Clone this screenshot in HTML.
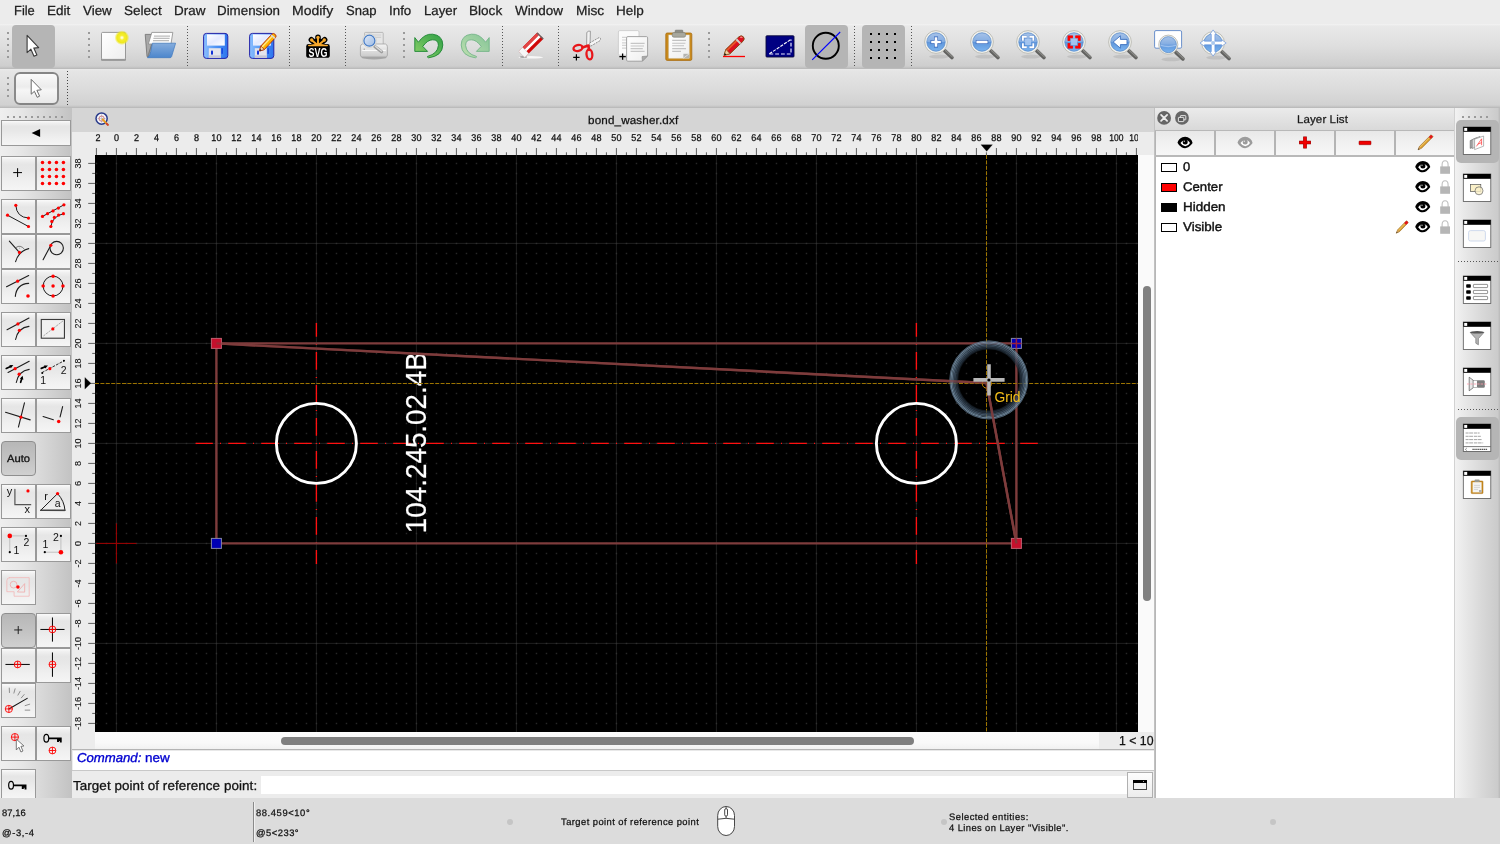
<!DOCTYPE html>
<html lang="en"><head><meta charset="utf-8"><title>bond_washer.dxf - QCAD</title>
<style>
*{box-sizing:border-box;margin:0;padding:0}
html,body{width:1500px;height:844px;overflow:hidden;background:#ececec}
body{font-family:"Liberation Sans",sans-serif;color:#000}
#app{will-change:transform;position:relative;width:1500px;height:844px;overflow:hidden;background:#ececec}
.a{position:absolute}
.t{position:absolute;white-space:nowrap;display:block}
svg{position:absolute;overflow:visible}
.btn{position:absolute;border:1px solid #9c9c9c;background:linear-gradient(#fdfdfd,#ededed 50%,#e4e4e4 52%,#f4f4f4);}
.btnp{position:absolute;border:1px solid #9a9a9a;border-radius:5px;background:linear-gradient(#b4b4b4,#c6c6c6);}

</style></head>
<body>
<div id="app">
<div class="a" style="left:0px;top:0px;width:1500px;height:24px;background:#ececec"></div>
<span class="t" style="left:13.80px;top:3.63px;font-size:13.2px;line-height:13.2px;color:#202020;transform:rotate(0.03deg) scaleX(0.9779);transform-origin:0 50%;-webkit-text-stroke:0.25px #202020;">File</span>
<span class="t" style="left:47.10px;top:3.63px;font-size:13.2px;line-height:13.2px;color:#202020;transform:rotate(0.03deg) scaleX(1.0243);transform-origin:0 50%;-webkit-text-stroke:0.25px #202020;">Edit</span>
<span class="t" style="left:82.90px;top:3.63px;font-size:13.2px;line-height:13.2px;color:#202020;transform:rotate(0.03deg) scaleX(1.0150);transform-origin:0 50%;-webkit-text-stroke:0.25px #202020;">View</span>
<span class="t" style="left:123.80px;top:3.63px;font-size:13.2px;line-height:13.2px;color:#202020;transform:rotate(0.03deg) scaleX(1.0276);transform-origin:0 50%;-webkit-text-stroke:0.25px #202020;">Select</span>
<span class="t" style="left:173.80px;top:3.63px;font-size:13.2px;line-height:13.2px;color:#202020;transform:rotate(0.03deg) scaleX(1.0194);transform-origin:0 50%;-webkit-text-stroke:0.25px #202020;">Draw</span>
<span class="t" style="left:216.70px;top:3.63px;font-size:13.2px;line-height:13.2px;color:#202020;transform:rotate(0.03deg) scaleX(1.0119);transform-origin:0 50%;-webkit-text-stroke:0.25px #202020;">Dimension</span>
<span class="t" style="left:291.80px;top:3.63px;font-size:13.2px;line-height:13.2px;color:#202020;transform:rotate(0.03deg) scaleX(1.0623);transform-origin:0 50%;-webkit-text-stroke:0.25px #202020;">Modify</span>
<span class="t" style="left:346.00px;top:3.63px;font-size:13.2px;line-height:13.2px;color:#202020;transform:rotate(0.03deg) scaleX(0.9893);transform-origin:0 50%;-webkit-text-stroke:0.25px #202020;">Snap</span>
<span class="t" style="left:389.00px;top:3.63px;font-size:13.2px;line-height:13.2px;color:#202020;transform:rotate(0.03deg) scaleX(1.0128);transform-origin:0 50%;-webkit-text-stroke:0.25px #202020;">Info</span>
<span class="t" style="left:423.80px;top:3.63px;font-size:13.2px;line-height:13.2px;color:#202020;transform:rotate(0.03deg) scaleX(1.0024);transform-origin:0 50%;-webkit-text-stroke:0.25px #202020;">Layer</span>
<span class="t" style="left:469.20px;top:3.63px;font-size:13.2px;line-height:13.2px;color:#202020;transform:rotate(0.03deg) scaleX(1.0285);transform-origin:0 50%;-webkit-text-stroke:0.25px #202020;">Block</span>
<span class="t" style="left:515.30px;top:3.63px;font-size:13.2px;line-height:13.2px;color:#202020;transform:rotate(0.03deg) scaleX(1.0224);transform-origin:0 50%;-webkit-text-stroke:0.25px #202020;">Window</span>
<span class="t" style="left:575.70px;top:3.63px;font-size:13.2px;line-height:13.2px;color:#202020;transform:rotate(0.03deg) scaleX(1.0395);transform-origin:0 50%;-webkit-text-stroke:0.25px #202020;">Misc</span>
<span class="t" style="left:615.80px;top:3.63px;font-size:13.2px;line-height:13.2px;color:#202020;transform:rotate(0.03deg) scaleX(1.0240);transform-origin:0 50%;-webkit-text-stroke:0.25px #202020;">Help</span>
<div class="a" style="left:0px;top:24px;width:1500px;height:45px;background:linear-gradient(#f3f3f3 0,#e9e9e9 2px,#dedede 50%,#cecece 42px,#c0c0c0 44px,#b6b6b6 45px)"></div>
<div class="a" style="left:0px;top:69px;width:1500px;height:39px;background:linear-gradient(#eaeaea 0,#e5e5e5 2px,#dcdcdc 50%,#d1d1d1 36px,#c2c2c2 38px,#b4b4b4 39px)"></div>
<div class="a" style="left:7px;top:32px;width:2px;height:2px;background:#9a9a9a"></div><div class="a" style="left:7px;top:38px;width:2px;height:2px;background:#9a9a9a"></div><div class="a" style="left:7px;top:44px;width:2px;height:2px;background:#9a9a9a"></div><div class="a" style="left:7px;top:50px;width:2px;height:2px;background:#9a9a9a"></div><div class="a" style="left:7px;top:56px;width:2px;height:2px;background:#9a9a9a"></div>
<div class="a" style="left:88px;top:32px;width:2px;height:2px;background:#9a9a9a"></div><div class="a" style="left:88px;top:38px;width:2px;height:2px;background:#9a9a9a"></div><div class="a" style="left:88px;top:44px;width:2px;height:2px;background:#9a9a9a"></div><div class="a" style="left:88px;top:50px;width:2px;height:2px;background:#9a9a9a"></div><div class="a" style="left:88px;top:56px;width:2px;height:2px;background:#9a9a9a"></div>
<div class="a" style="left:403px;top:32px;width:2px;height:2px;background:#9a9a9a"></div><div class="a" style="left:403px;top:38px;width:2px;height:2px;background:#9a9a9a"></div><div class="a" style="left:403px;top:44px;width:2px;height:2px;background:#9a9a9a"></div><div class="a" style="left:403px;top:50px;width:2px;height:2px;background:#9a9a9a"></div><div class="a" style="left:403px;top:56px;width:2px;height:2px;background:#9a9a9a"></div>
<div class="a" style="left:708px;top:32px;width:2px;height:2px;background:#9a9a9a"></div><div class="a" style="left:708px;top:38px;width:2px;height:2px;background:#9a9a9a"></div><div class="a" style="left:708px;top:44px;width:2px;height:2px;background:#9a9a9a"></div><div class="a" style="left:708px;top:50px;width:2px;height:2px;background:#9a9a9a"></div><div class="a" style="left:708px;top:56px;width:2px;height:2px;background:#9a9a9a"></div>
<div class="a" style="left:7px;top:77px;width:2px;height:2px;background:#9a9a9a"></div><div class="a" style="left:7px;top:83px;width:2px;height:2px;background:#9a9a9a"></div><div class="a" style="left:7px;top:89px;width:2px;height:2px;background:#9a9a9a"></div><div class="a" style="left:7px;top:95px;width:2px;height:2px;background:#9a9a9a"></div>
<div class="a" style="left:187px;top:26px;width:1px;height:40px;background:repeating-linear-gradient(#555 0,#555 1px,transparent 1px,transparent 3px)"></div>
<div class="a" style="left:289px;top:26px;width:1px;height:40px;background:repeating-linear-gradient(#555 0,#555 1px,transparent 1px,transparent 3px)"></div>
<div class="a" style="left:345px;top:26px;width:1px;height:40px;background:repeating-linear-gradient(#555 0,#555 1px,transparent 1px,transparent 3px)"></div>
<div class="a" style="left:502px;top:26px;width:1px;height:40px;background:repeating-linear-gradient(#555 0,#555 1px,transparent 1px,transparent 3px)"></div>
<div class="a" style="left:558px;top:26px;width:1px;height:40px;background:repeating-linear-gradient(#555 0,#555 1px,transparent 1px,transparent 3px)"></div>
<div class="a" style="left:854px;top:26px;width:1px;height:40px;background:repeating-linear-gradient(#555 0,#555 1px,transparent 1px,transparent 3px)"></div>
<div class="a" style="left:911px;top:26px;width:1px;height:40px;background:repeating-linear-gradient(#555 0,#555 1px,transparent 1px,transparent 3px)"></div>
<div class="a" style="left:67px;top:71px;width:1px;height:34px;background:repeating-linear-gradient(#444 0,#444 1px,transparent 1px,transparent 3px)"></div>
<div class="a" style="left:12px;top:25px;width:43px;height:43px;background:#b5b5b5;border-radius:4px"></div>
<div class="a" style="left:805px;top:25px;width:43px;height:43px;background:#b5b5b5;border-radius:4px"></div>
<div class="a" style="left:862px;top:25px;width:43px;height:43px;background:#b5b5b5;border-radius:4px"></div>
<div class="a" style="left:14px;top:72px;width:45px;height:33px;border-radius:6px;background:linear-gradient(#fcfcfc,#ececec 45%,#f6f6f6 55%,#e6e6e6)"></div>
<svg style="left:14px;top:72px" width="45" height="33" viewBox="0 0 45 33"><rect x="1" y="1" width="43" height="31" rx="5" fill="none" stroke="#858585" stroke-width="1.9"/></svg>
<div class="a" style="left:0px;top:108px;width:72px;height:690px;background:linear-gradient(90deg,#efefef 0,#e6e6e6 30%,#d2d2d2 70%,#c2c2c2 100%)"></div>
<div class="a" style="left:7px;top:116px;width:2px;height:2px;background:#9a9a9a"></div><div class="a" style="left:13px;top:116px;width:2px;height:2px;background:#9a9a9a"></div><div class="a" style="left:19px;top:116px;width:2px;height:2px;background:#9a9a9a"></div><div class="a" style="left:25px;top:116px;width:2px;height:2px;background:#9a9a9a"></div><div class="a" style="left:31px;top:116px;width:2px;height:2px;background:#9a9a9a"></div><div class="a" style="left:37px;top:116px;width:2px;height:2px;background:#9a9a9a"></div><div class="a" style="left:43px;top:116px;width:2px;height:2px;background:#9a9a9a"></div><div class="a" style="left:49px;top:116px;width:2px;height:2px;background:#9a9a9a"></div><div class="a" style="left:55px;top:116px;width:2px;height:2px;background:#9a9a9a"></div><div class="a" style="left:61px;top:116px;width:2px;height:2px;background:#9a9a9a"></div>
<div class="a" style="left:72px;top:108px;width:1083px;height:24px;background:#d5d5d5"></div>
<svg style="left:95px;top:112px" width="14" height="14" viewBox="0 0 14 14"><circle cx="6.6" cy="6.6" r="5.6" fill="#f4f4f8" stroke="#2a3c8c" stroke-width="1.5"/><path d="M6.6 2.4V10.8M2.4 6.6H10.8" stroke="#b8b8c8" stroke-width="0.7"/><circle cx="6.6" cy="6.6" r="2.6" fill="none" stroke="#c05050" stroke-width="0.7"/><path d="M7.6 7.4L12.6 12.6" stroke="#e8a020" stroke-width="2" stroke-linecap="round"/><path d="M11.6 11.6L12.9 12.9" stroke="#d04030" stroke-width="2" stroke-linecap="round"/></svg>
<span class="t" style="left:588.40px;top:115.03px;font-size:11.3px;line-height:11.3px;color:#111;letter-spacing:0.155px;transform:rotate(0.03deg) scaleX(1.0300);transform-origin:0 50%;-webkit-text-stroke:0.25px #111;">bond_washer.dxf</span>
<div class="a" style="left:72px;top:132px;width:1083px;height:23px;background:#ececec"></div>
<div class="a" style="left:72px;top:155px;width:23px;height:595px;background:#ececec"></div>
<div class="a" style="left:1138px;top:155px;width:17px;height:595px;background:#fafafa"></div>
<div class="a" style="left:95px;top:732px;width:1043px;height:18px;background:linear-gradient(#fbfbfb,#f9f9f9 60%,#f0f0f0)"></div>
<div class="a" style="left:1143px;top:286px;width:8px;height:315px;background:#808080;border-radius:4px"></div>
<div class="a" style="left:281px;top:737px;width:633px;height:8px;background:#7f7f7f;border-radius:4px"></div>
<div class="a" style="left:1099px;top:732px;width:55px;height:17px;background:#ececec"></div>
<span class="t" style="left:1119.00px;top:734.30px;font-size:13px;line-height:13px;color:#111;transform:rotate(0.03deg) scaleX(0.9451);transform-origin:0 50%;-webkit-text-stroke:0.25px #111;">1 &lt; 10</span>
<div class="a" style="left:72px;top:749px;width:1083px;height:2px;background:linear-gradient(#b4b4b4 0,#b4b4b4 1px,#dcdcdc 1px,#f4f4f4 2px)"></div>
<div class="a" style="left:73px;top:751px;width:1082px;height:19px;background:#fff"></div>
<div class="a" style="left:72px;top:770px;width:1083px;height:1px;background:#c8c8c8"></div>
<span class="t" style="left:77.20px;top:751.88px;font-size:12.9px;line-height:12.9px;color:#0000d0;font-style:italic;transform:rotate(0.03deg) scaleX(1.0207);transform-origin:0 50%;-webkit-text-stroke:0.35px #0000d0;">Command:</span>
<span class="t" style="left:145.30px;top:751.88px;font-size:12.9px;line-height:12.9px;color:#0000d0;transform:rotate(0.03deg) scaleX(1.0479);transform-origin:0 50%;-webkit-text-stroke:0.35px #0000d0;">new</span>
<div class="a" style="left:72px;top:771px;width:1083px;height:27px;background:#ececec"></div>
<span class="t" style="left:73.20px;top:778.80px;font-size:13px;line-height:13px;color:#111;letter-spacing:0.078px;transform:rotate(0.03deg) scaleX(1.0300);transform-origin:0 50%;-webkit-text-stroke:0.3px #111;">Target point of reference point:</span>
<div class="a" style="left:261px;top:776px;width:866px;height:18px;background:#fff"></div>
<div class="a" style="left:1127px;top:772px;width:26px;height:26px;border:1px solid #b0b0b0;background:linear-gradient(#fdfdfd,#ececec)"></div>
<svg style="left:1133px;top:780px" width="14" height="10" viewBox="0 0 14 10"><rect x="0.5" y="0.5" width="13" height="9" fill="#f2f2f2" stroke="#444" stroke-width="1"/><rect x="0" y="0" width="14" height="3" fill="#000"/><rect x="10" y="1" width="1" height="1" fill="#aaa"/></svg>
<div class="a" style="left:0px;top:798px;width:1500px;height:46px;background:#dcdcdc"></div>
<span class="t" style="left:2.00px;top:807.54px;font-size:9.4px;line-height:9.4px;color:#111;letter-spacing:0.095px;transform:rotate(0.03deg) scaleX(1.0000);transform-origin:0 50%;-webkit-text-stroke:0.25px #111;">87,16</span>
<span class="t" style="left:2.00px;top:827.74px;font-size:9.4px;line-height:9.4px;color:#111;letter-spacing:0.655px;transform:rotate(0.03deg) scaleX(1.0000);transform-origin:0 50%;-webkit-text-stroke:0.25px #111;">@-3,-4</span>
<div class="a" style="left:253px;top:802px;width:1px;height:40px;background:#8a8a8a"></div>
<div class="a" style="left:254px;top:802px;width:1px;height:40px;background:#f0f0f0"></div>
<span class="t" style="left:256.00px;top:807.54px;font-size:9.4px;line-height:9.4px;color:#111;letter-spacing:0.594px;transform:rotate(0.03deg) scaleX(1.0000);transform-origin:0 50%;-webkit-text-stroke:0.25px #111;">88.459&lt;10°</span>
<span class="t" style="left:256.00px;top:827.84px;font-size:9.4px;line-height:9.4px;color:#111;letter-spacing:0.500px;transform:rotate(0.03deg) scaleX(1.0000);transform-origin:0 50%;-webkit-text-stroke:0.25px #111;">@5&lt;233°</span>
<span class="t" style="left:560.60px;top:817.24px;font-size:9.4px;line-height:9.4px;color:#111;letter-spacing:0.442px;transform:rotate(0.03deg) scaleX(1.0000);transform-origin:0 50%;-webkit-text-stroke:0.25px #111;">Target point of reference point</span>
<span class="t" style="left:949.00px;top:812.24px;font-size:9.4px;line-height:9.4px;color:#111;letter-spacing:0.467px;transform:rotate(0.03deg) scaleX(1.0000);transform-origin:0 50%;-webkit-text-stroke:0.25px #111;">Selected entities:</span>
<span class="t" style="left:949.00px;top:823.24px;font-size:9.4px;line-height:9.4px;color:#111;letter-spacing:0.410px;transform:rotate(0.03deg) scaleX(1.0000);transform-origin:0 50%;-webkit-text-stroke:0.25px #111;">4 Lines on Layer &quot;Visible&quot;.</span>
<div class="a" style="left:506.5px;top:819px;width:6px;height:6px;background:#c5c5c5;border-radius:3px"></div>
<div class="a" style="left:940.5px;top:819px;width:6px;height:6px;background:#c5c5c5;border-radius:3px"></div>
<div class="a" style="left:1269.5px;top:819px;width:6px;height:6px;background:#c5c5c5;border-radius:3px"></div>
<svg style="left:717px;top:806px" width="18" height="30" viewBox="0 0 18 30"><rect x="0.7" y="0.5" width="16.8" height="29" rx="8.4" ry="9" fill="#fff" stroke="#333" stroke-width="0.9"/><path d="M0.9 13.2Q9 11.4 17.3 13.2M9.1 0.6V2.6M9.1 10.2V12.2" stroke="#333" stroke-width="0.9" fill="none"/><rect x="7.7" y="2.6" width="2.8" height="7.6" rx="1.4" fill="#fff" stroke="#333" stroke-width="0.9"/></svg>
<svg style="left:0;top:24px" width="1500" height="84" viewBox="0 24 1500 84"><defs>
<linearGradient id="lens" x1="0" y1="0" x2="0" y2="1"><stop offset="0" stop-color="#8fb2e2"/><stop offset="0.5" stop-color="#5f95da"/><stop offset="1" stop-color="#7ab4f0"/></linearGradient>
<linearGradient id="pg" x1="0" y1="0" x2="1" y2="1"><stop offset="0" stop-color="#ffffff"/><stop offset="1" stop-color="#eeeeee"/></linearGradient>
<radialGradient id="sun" cx="0.5" cy="0.5" r="0.5"><stop offset="0" stop-color="#fffff4"/><stop offset="0.12" stop-color="#fffbc0"/><stop offset="0.32" stop-color="#f6ee30"/><stop offset="0.68" stop-color="#efe81c"/><stop offset="1" stop-color="#efe81c" stop-opacity="0"/></radialGradient>
<linearGradient id="fl" x1="0" y1="0" x2="1" y2="0"><stop offset="0" stop-color="#8cc0ff"/><stop offset="0.5" stop-color="#4f93f4"/><stop offset="1" stop-color="#2c74ee"/></linearGradient>
<linearGradient id="flw" x1="0" y1="0" x2="1" y2="1"><stop offset="0" stop-color="#ffffff"/><stop offset="0.5" stop-color="#e4eaff"/><stop offset="1" stop-color="#ffffff"/></linearGradient>
<linearGradient id="fold" x1="0" y1="0" x2="0" y2="1"><stop offset="0" stop-color="#86addd"/><stop offset="1" stop-color="#4c86cc"/></linearGradient>
<linearGradient id="und" x1="0" y1="1" x2="1" y2="0"><stop offset="0" stop-color="#8fd26a"/><stop offset="1" stop-color="#2e9f45"/></linearGradient>
<linearGradient id="red" x1="1" y1="1" x2="0" y2="0"><stop offset="0" stop-color="#bfe0b0"/><stop offset="1" stop-color="#84c496"/></linearGradient>
<linearGradient id="prn" x1="0" y1="0" x2="0" y2="1"><stop offset="0" stop-color="#f4f4f4"/><stop offset="1" stop-color="#c9c9c9"/></linearGradient>
<linearGradient id="gl" x1="0" y1="0" x2="1" y2="1"><stop offset="0" stop-color="#dfe9f8"/><stop offset="1" stop-color="#9dbbe4"/></linearGradient>
</defs><path d="M27.1 35.4V52.6L30.9 49.2L34 56.2L36.9 54.9L33.8 48.1L38.7 47.6Z" fill="#fff" stroke="#3a3a3a" stroke-width="1.1" stroke-linejoin="round"/><path d="M31.2 79.4V94.2L34.4 91.3L37.2 97.3L39.6 96.2L36.9 90.3L41.3 89.8Z" fill="#fff" stroke="#6a6a6a" stroke-width="1" stroke-linejoin="round"/><rect x="101" y="58.6" width="25" height="2.2" rx="1" fill="#8c8c8c"/><rect x="101.5" y="32.4" width="24" height="27" rx="1.2" fill="url(#pg)" stroke="#8e8e8e" stroke-width="0.9"/><circle cx="121.9" cy="37.7" r="7.4" fill="url(#sun)"/><path d="M145.2 34.4H151.2L152.6 36H170V56.6H147Z" fill="#a8a8a8" stroke="#6e6e6e" stroke-width="0.8"/><path d="M151.8 32.4H172.8L171 44H148.4Z" fill="#fdfdfd" stroke="#8a8a8a" stroke-width="0.8"/><path d="M154 36.2H170M153.4 38.4H169.6M153 40.6H169" stroke="#bcbcbc" stroke-width="1.3"/><path d="M148 57L151.6 44.6L147.8 56Z" fill="#fff" stroke="#777" stroke-width="0.8"/><path d="M152.4 43.2H175.6L171.6 56.6Q171.3 57.7 170 57.7H147.4Q150.2 55.6 150.8 51.6Z" fill="url(#fold)" stroke="#3f78be" stroke-width="0.7"/><rect x="203.6" y="33.4" width="24.2" height="25" rx="2.8" fill="url(#fl)" stroke="#2424a8" stroke-width="1"/><rect x="207.0" y="34.4" width="17.8" height="11.2" fill="url(#flw)"/><rect x="208.79999999999998" y="48.2" width="12" height="9.6" fill="#e4e4ec"/><rect x="208.79999999999998" y="55.4" width="12" height="2.4" fill="#c6c6d4"/><rect x="211.0" y="50.4" width="2" height="4.4" rx="0.8" fill="#1030d8"/><rect x="221.4" y="48.2" width="1.6" height="5.6" fill="#1848e0"/><rect x="249.6" y="33.4" width="24.2" height="25" rx="2.8" fill="url(#fl)" stroke="#2424a8" stroke-width="1"/><rect x="253.0" y="34.4" width="17.8" height="11.2" fill="url(#flw)"/><rect x="254.79999999999998" y="48.2" width="12" height="9.6" fill="#e4e4ec"/><rect x="254.79999999999998" y="55.4" width="12" height="2.4" fill="#c6c6d4"/><rect x="257.0" y="50.4" width="2" height="4.4" rx="0.8" fill="#1030d8"/><rect x="267.4" y="48.2" width="1.6" height="5.6" fill="#1848e0"/><g transform="translate(259.6 51) rotate(-47)"><path d="M0 0L4.4 -2.5H20.6Q22.8 -2.5 22.8 0Q22.8 2.5 20.6 2.5H4.4Z" fill="#ffb400" stroke="#b03010" stroke-width="0.9" stroke-linejoin="round"/><path d="M4.6 -0.9H19.6" stroke="#ffe890" stroke-width="1.3"/><path d="M0 0L4.4 -2.5V2.5Z" fill="#f6d9a8" stroke="#a03010" stroke-width="0.7"/><path d="M0 0L1.8 -1V1Z" fill="#222"/><path d="M19.6 -2.5V2.5" stroke="#d8d8d8" stroke-width="1.6"/></g><path d="M306.2 46.4Q306.2 44 308.6 44H327.4Q329.8 44 329.8 46.4V55.2Q329.8 57.8 327.2 57.8H308.8Q306.2 57.8 306.2 55.2Z" fill="#000"/><g stroke="#000" stroke-width="5.6" stroke-linecap="round"><path d="M318 44.6V37.2M317 44.6L311.4 39.8M319 44.6L324.6 39.8"/></g><g stroke="#f7a92c" stroke-width="1.9" stroke-linecap="round"><path d="M318 44.8V37.6M317.2 44.8L311.8 40.2M318.8 44.8L324.2 40.2"/></g><circle cx="318" cy="37.4" r="1.7" fill="#f7a92c"/><circle cx="311.7" cy="40" r="1.7" fill="#f7a92c"/><circle cx="324.3" cy="40" r="1.7" fill="#f7a92c"/><path d="M309 45.6Q318 42 327 45.6Z" fill="#f7a92c"/><path d="M308.8 45.4H327.2" stroke="#f7a92c" stroke-width="1.5" stroke-linecap="round"/><text x="318" y="56.7" font-family="Liberation Sans, sans-serif" font-weight="bold" font-size="13.4" fill="#fff" text-anchor="middle" textLength="18.8" lengthAdjust="spacingAndGlyphs">SVG</text><ellipse cx="374" cy="57.6" rx="12.6" ry="1.8" fill="#000" opacity="0.22"/><rect x="364.6" y="32.4" width="18.6" height="13" rx="0.8" fill="#e6e6e6" stroke="#adadad" stroke-width="0.8"/><path d="M366.6 35H381.2M366.6 37.4H381.2" stroke="#d0d0d0" stroke-width="1.2"/><path d="M362.4 44H385.4Q387.4 44.6 387.4 46.8V55Q387.4 57 385.4 57H362.4Q360.4 57 360.4 55V46.8Q360.4 44.6 362.4 44Z" fill="url(#prn)" stroke="#a2a2a2" stroke-width="0.8"/><path d="M362.2 50.4H385.8" stroke="#fafafa" stroke-width="1.2"/><circle cx="364.2" cy="49.2" r="0.6" fill="#888"/><path d="M374.8 46.4L381.6 51.8" stroke="#9e9e9e" stroke-width="3.2" stroke-linecap="round"/><path d="M375.4 46.2L381.6 51.2" stroke="#dedede" stroke-width="1.2" stroke-linecap="round"/><circle cx="369.4" cy="40.7" r="6.9" fill="#f2f2f0" stroke="#c4c4c0" stroke-width="0.6"/><circle cx="369.4" cy="40.7" r="5.5" fill="url(#gl)" stroke="#4178c4" stroke-width="1.2"/><path d="M414.8 37.6L418.4 42.2Q424.6 33.4 432.6 34.2Q442.6 35.2 442.8 45Q442.4 56 428.6 57.8Q426.8 57.2 427.6 56.4Q437.8 53.6 438.4 45.4Q438.4 39.6 432.6 39.8Q427.6 39.8 422.8 46.4L427.6 51.4H414.8Z" fill="url(#und)" stroke="#1c8632" stroke-width="0.9" stroke-linejoin="round"/><g transform="translate(904 0) scale(-1 1)"><path d="M414.8 37.6L418.4 42.2Q424.6 33.4 432.6 34.2Q442.6 35.2 442.8 45Q442.4 56 428.6 57.8Q426.8 57.2 427.6 56.4Q437.8 53.6 438.4 45.4Q438.4 39.6 432.6 39.8Q427.6 39.8 422.8 46.4L427.6 51.4H414.8Z" fill="url(#red)" stroke="#74b488" stroke-width="0.9" stroke-linejoin="round"/></g><ellipse cx="530.8" cy="57.3" rx="12.4" ry="1.3" fill="#fff" opacity="0.8"/><ellipse cx="523.6" cy="57" rx="3.6" ry="1.1" fill="#555" opacity="0.5"/><g transform="translate(521.8 54.3) rotate(-45)"><rect x="0" y="-4.4" width="26.4" height="8.8" rx="0.8" fill="#d00808"/><rect x="0" y="-1.6" width="26.4" height="2.7" fill="#fff"/><rect x="0" y="-4.4" width="26.4" height="2.8" fill="#e24444"/><rect x="-0.2" y="-4.4" width="5.6" height="8.8" fill="#f6f6f6" stroke="#c9c9c9" stroke-width="0.5"/><rect x="25.2" y="-4.4" width="1.4" height="8.8" fill="#666"/></g><path d="M586.6 46.6L586.8 32.4Q588.6 30.6 590.4 31.2L590 46Z" fill="#f2f2f2" stroke="#8a8a8a" stroke-width="0.8" stroke-linejoin="round"/><path d="M589.6 43L599.4 37.4Q601 38.2 600.4 40.4L590 46.6Z" fill="#f6f6f6" stroke="#777" stroke-width="0.8" stroke-dasharray="2 1" stroke-linejoin="round"/><ellipse cx="578" cy="48" rx="4.6" ry="2.9" transform="rotate(-14 578 48)" fill="none" stroke="#e8161a" stroke-width="2.3"/><ellipse cx="589.4" cy="54.4" rx="2.9" ry="5" transform="rotate(-6 589.4 54.4)" fill="none" stroke="#e8161a" stroke-width="2.3"/><path d="M582.4 47.4L588.4 45.6L589 50" stroke="#e8161a" stroke-width="2.6" fill="none" stroke-linejoin="round" stroke-linecap="round"/><path d="M573.2 57.4H579.6M576.4 54.2V60.6" stroke="#000" stroke-width="1.2"/><rect x="618.4" y="30.6" width="20.6" height="24.6" rx="1.4" fill="#fbfbfb" stroke="#c8c8c8" stroke-width="0.8"/><path d="M622 37.4H632M622 40H632M622 42.8H632M622 45.4H632M622 48.2H632" stroke="#d4d4d4" stroke-width="1.2"/><path d="M627.8 36.6H646.4Q647.6 36.6 647.6 37.8V56L642.4 61.2H627.8Q626.6 61.2 626.6 60V37.8Q626.6 36.6 627.8 36.6Z" fill="url(#pg)" stroke="#9a9a9a" stroke-width="0.9"/><path d="M630.6 43.4H644.6M630.6 46H644M630.6 48.6H642.8M630.6 51.4H644.6" stroke="#c6c6c6" stroke-width="1.2"/><path d="M647.4 56L642.4 61L642 56.6Z" fill="#aaa" stroke="#8a8a8a" stroke-width="0.6"/><path d="M619.4 56.6H625.8M622.6 53.4V59.8" stroke="#000" stroke-width="1.3"/><rect x="665.8" y="33" width="26" height="27.4" rx="1.4" fill="#c98a1c" stroke="#a86c10" stroke-width="0.8"/><rect x="668.8" y="35" width="20.4" height="23.2" fill="url(#pg)" stroke="#d8d8d0" stroke-width="0.5"/><path d="M672.2 40.4H686M672.2 43.2H685.4M672.2 45.8H684M672.2 48.6H686M672.2 51.4H681" stroke="#c2c2c2" stroke-width="1.1"/><path d="M683.4 53.8H689.2V58.2H683.4Z" fill="#b4b4b0"/><path d="M683.4 58.2L689.2 53.8" stroke="#e8e8e8" stroke-width="0.8"/><rect x="675.2" y="30.2" width="7.6" height="3.4" rx="0.6" fill="#8e8e86" stroke="#6a6a64" stroke-width="0.6"/><rect x="672.2" y="32.6" width="13.4" height="4.6" rx="1.6" fill="#a8a89e" stroke="#7a7a72" stroke-width="0.6"/><path d="M723 56.5H745" stroke="#fe0000" stroke-width="1.3"/><g transform="translate(724.1 55.3) rotate(-44) scale(1.085 1)"><path d="M0 0L5 -3H21.6Q24.6 -3 24.6 0Q24.6 3 21.6 3H5Z" fill="#dc1020" stroke="#7a4a10" stroke-width="0.8" stroke-linejoin="round"/><path d="M5 -1.6H18.6" stroke="#e85a28" stroke-width="1.6"/><path d="M18.4 -3V3" stroke="#d0d0d0" stroke-width="1.8"/><path d="M22 -1.6Q23.2 -1.4 23.4 0" stroke="#ff8a8a" stroke-width="1.2" fill="none"/><path d="M0 0L5 -3V3Z" fill="#f2cfa0" stroke="#7a4a10" stroke-width="0.6"/><path d="M0 0L2 -1.2V1.2Z" fill="#111"/></g><rect x="766" y="35.8" width="28" height="21.2" rx="0.8" fill="#000082" stroke="#0a0a3c" stroke-width="0.9"/><path d="M769.4 53.8L791 39.4" stroke="#fff" stroke-width="1.1" stroke-dasharray="3.2 1.2"/><path d="M769.4 54H791V39.6" stroke="#e8e8ff" stroke-width="1.2" stroke-dasharray="3.8 2" fill="none"/><circle cx="825.8" cy="45.8" r="13" fill="none" stroke="#000" stroke-width="1.9"/><path d="M812.2 59.8L840.2 32" stroke="#0000ff" stroke-width="1.1"/><rect x="870.0" y="33.0" width="2" height="2" fill="#000"/><rect x="870.0" y="41.0" width="2" height="2" fill="#000"/><rect x="870.0" y="49.0" width="2" height="2" fill="#000"/><rect x="870.0" y="57.0" width="2" height="2" fill="#000"/><rect x="878.0" y="33.0" width="2" height="2" fill="#000"/><rect x="878.0" y="41.0" width="2" height="2" fill="#000"/><rect x="878.0" y="49.0" width="2" height="2" fill="#000"/><rect x="878.0" y="57.0" width="2" height="2" fill="#000"/><rect x="886.0" y="33.0" width="2" height="2" fill="#000"/><rect x="886.0" y="41.0" width="2" height="2" fill="#000"/><rect x="886.0" y="49.0" width="2" height="2" fill="#000"/><rect x="886.0" y="57.0" width="2" height="2" fill="#000"/><rect x="894.0" y="33.0" width="2" height="2" fill="#000"/><rect x="894.0" y="41.0" width="2" height="2" fill="#000"/><rect x="894.0" y="49.0" width="2" height="2" fill="#000"/><rect x="894.0" y="57.0" width="2" height="2" fill="#000"/><ellipse cx="939" cy="56.6" rx="10" ry="2" fill="#000" opacity="0.09"/><path d="M944.9 50.9L951.9 57.5" stroke="#626260" stroke-width="3.7" stroke-linecap="round"/><path d="M945.5 50.5L952.3 56.9" stroke="#8a8a86" stroke-width="1.2" stroke-linecap="round"/><circle cx="936" cy="42.0" r="11.4" fill="#f1f1ec" stroke="#b4b4ac" stroke-width="0.8"/><circle cx="936" cy="42.0" r="9.2" fill="url(#lens)" stroke="#5b8dcc" stroke-width="0.8"/><path d="M927.2 42.0A8.8 8.8 0 0 1 944.8 42.0Z" fill="#fff" opacity="0.22"/><path d="M936 36.6V47.4M930.6 42H941.4" stroke="#2f62b8" stroke-width="4"/><path d="M936 37.2V46.8M931.2 42H940.8" stroke="#fff" stroke-width="2.7"/><ellipse cx="985" cy="56.6" rx="10" ry="2" fill="#000" opacity="0.09"/><path d="M990.9 50.9L997.9 57.5" stroke="#626260" stroke-width="3.7" stroke-linecap="round"/><path d="M991.5 50.5L998.3 56.9" stroke="#8a8a86" stroke-width="1.2" stroke-linecap="round"/><circle cx="982" cy="42.0" r="11.4" fill="#f1f1ec" stroke="#b4b4ac" stroke-width="0.8"/><circle cx="982" cy="42.0" r="9.2" fill="url(#lens)" stroke="#5b8dcc" stroke-width="0.8"/><path d="M973.2 42.0A8.8 8.8 0 0 1 990.8 42.0Z" fill="#fff" opacity="0.22"/><path d="M975.8 42H988.2" stroke="#2f62b8" stroke-width="4"/><path d="M976.4 42H987.6" stroke="#fff" stroke-width="2.7"/><ellipse cx="1031" cy="56.6" rx="10" ry="2" fill="#000" opacity="0.09"/><path d="M1036.9 50.9L1043.9 57.5" stroke="#626260" stroke-width="3.7" stroke-linecap="round"/><path d="M1037.5 50.5L1044.3 56.9" stroke="#8a8a86" stroke-width="1.2" stroke-linecap="round"/><circle cx="1028" cy="42.0" r="11.4" fill="#f1f1ec" stroke="#b4b4ac" stroke-width="0.8"/><circle cx="1028" cy="42.0" r="9.2" fill="url(#lens)" stroke="#5b8dcc" stroke-width="0.8"/><path d="M1019.2 42.0A8.8 8.8 0 0 1 1036.8 42.0Z" fill="#fff" opacity="0.22"/><rect x="1025.1" y="39" width="6" height="6" fill="#a9c8f0" opacity="0.9"/><path d="M1022.8999999999999 40.7V36.8H1026.8M1029.3999999999999 36.8H1033.3V40.7M1033.3 43.3V47.2H1029.3999999999999M1026.8 47.2H1022.8999999999999V43.3" stroke="#3f74c4" stroke-width="2.8" fill="none" stroke-linejoin="miter"/><path d="M1022.8999999999999 40.7V36.8H1026.8M1029.3999999999999 36.8H1033.3V40.7M1033.3 43.3V47.2H1029.3999999999999M1026.8 47.2H1022.8999999999999V43.3" stroke="#fff" stroke-width="1.9" fill="none" stroke-linejoin="miter"/><ellipse cx="1077" cy="56.6" rx="10" ry="2" fill="#000" opacity="0.09"/><path d="M1082.9 50.9L1089.9 57.5" stroke="#626260" stroke-width="3.7" stroke-linecap="round"/><path d="M1083.5 50.5L1090.3 56.9" stroke="#8a8a86" stroke-width="1.2" stroke-linecap="round"/><circle cx="1074" cy="42.0" r="11.4" fill="#f1f1ec" stroke="#b4b4ac" stroke-width="0.8"/><circle cx="1074" cy="42.0" r="9.2" fill="url(#lens)" stroke="#5b8dcc" stroke-width="0.8"/><path d="M1065.2 42.0A8.8 8.8 0 0 1 1082.8 42.0Z" fill="#fff" opacity="0.22"/><rect x="1071.1" y="39" width="6" height="6" fill="#a9c8f0" opacity="0.9"/><path d="M1068.8999999999999 40.7V36.8H1072.8M1075.3999999999999 36.8H1079.3V40.7M1079.3 43.3V47.2H1075.3999999999999M1072.8 47.2H1068.8999999999999V43.3" stroke="#d82020" stroke-width="2.8" fill="none" stroke-linejoin="miter"/><path d="M1068.8999999999999 40.7V36.8H1072.8M1075.3999999999999 36.8H1079.3V40.7M1079.3 43.3V47.2H1075.3999999999999M1072.8 47.2H1068.8999999999999V43.3" stroke="#ff0000" stroke-width="1.9" fill="none" stroke-linejoin="miter"/><ellipse cx="1123" cy="56.6" rx="10" ry="2" fill="#000" opacity="0.09"/><path d="M1128.9 50.9L1135.9 57.5" stroke="#626260" stroke-width="3.7" stroke-linecap="round"/><path d="M1129.5 50.5L1136.3 56.9" stroke="#8a8a86" stroke-width="1.2" stroke-linecap="round"/><circle cx="1120" cy="42.0" r="11.4" fill="#f1f1ec" stroke="#b4b4ac" stroke-width="0.8"/><circle cx="1120" cy="42.0" r="9.2" fill="url(#lens)" stroke="#5b8dcc" stroke-width="0.8"/><path d="M1111.2 42.0A8.8 8.8 0 0 1 1128.8 42.0Z" fill="#fff" opacity="0.22"/><path d="M1113.2 42L1120.4 35.8V39.4H1127V44.6H1120.4V48.2Z" fill="#fff" stroke="#3a6fc0" stroke-width="0.9" stroke-linejoin="round"/><rect x="1154.6" y="30.6" width="27" height="17.6" rx="1.4" fill="#fff" stroke="#6a90cc" stroke-width="1"/><ellipse cx="1171.3" cy="59.300000000000004" rx="10" ry="2" fill="#000" opacity="0.09"/><path d="M1175.9 52.3L1182.9 58.9" stroke="#626260" stroke-width="3.7" stroke-linecap="round"/><path d="M1176.5 51.9L1183.3 58.3" stroke="#8a8a86" stroke-width="1.2" stroke-linecap="round"/><circle cx="1168.3" cy="44.7" r="9.6" fill="#f1f1ec" stroke="#b4b4ac" stroke-width="0.8"/><circle cx="1168.3" cy="44.7" r="8" fill="url(#lens)" stroke="#5b8dcc" stroke-width="0.8"/><path d="M1160.7 44.7A7.6 7.6 0 0 1 1175.9 44.7Z" fill="#fff" opacity="0.22"/><path d="M1160.6 45.4Q1168.3 47.6 1176 45.4" stroke="#9cc0ee" stroke-width="1.4" fill="none"/><ellipse cx="1216.1" cy="57.6" rx="10" ry="2" fill="#000" opacity="0.09"/><path d="M1222.0 51.9L1229.0 58.5" stroke="#626260" stroke-width="3.7" stroke-linecap="round"/><path d="M1222.6 51.5L1229.4 57.9" stroke="#8a8a86" stroke-width="1.2" stroke-linecap="round"/><circle cx="1213.1" cy="43" r="11.4" fill="#f1f1ec" stroke="#b4b4ac" stroke-width="0.8"/><circle cx="1213.1" cy="43" r="9.2" fill="url(#lens)" stroke="#5b8dcc" stroke-width="0.8"/><path d="M1204.3 43A8.8 8.8 0 0 1 1221.9 43Z" fill="#fff" opacity="0.22"/><path d="M1211.30 41.10L1211.30 34.40L1209.90 34.40L1213.10 29.90L1216.30 34.40L1214.90 34.40L1214.90 41.10L1215.00 41.20L1221.70 41.20L1221.70 39.80L1226.20 43.00L1221.70 46.20L1221.70 44.80L1215.00 44.80L1214.90 44.90L1214.90 51.60L1216.30 51.60L1213.10 56.10L1209.90 51.60L1211.30 51.60L1211.30 44.90L1211.20 44.80L1204.50 44.80L1204.50 46.20L1200.00 43.00L1204.50 39.80L1204.50 41.20L1211.20 41.20Z" fill="#fff" stroke="#5a8cd8" stroke-width="0.6" stroke-linejoin="round"/><rect x="1211.3" y="41.2" width="3.6" height="3.6" fill="#a9c6ec"/></svg>
<div class="a" style="left:1px;top:120px;width:70px;height:26px;border:1px solid #999;background:linear-gradient(#fbfbfb 0,#f0f0f0 8%,#e6e6e6 22%,#e7e7e7 40%,#f0f0f0 75%,#f5f5f5 100%)"></div>
<div class="a" style="left:1px;top:156px;width:35px;height:35px;border:1px solid #999;background:linear-gradient(#fbfbfb 0,#f0f0f0 8%,#e6e6e6 22%,#e7e7e7 40%,#f0f0f0 75%,#f5f5f5 100%)"></div>
<div class="a" style="left:36px;top:156px;width:35px;height:35px;border:1px solid #999;background:linear-gradient(#fbfbfb 0,#f0f0f0 8%,#e6e6e6 22%,#e7e7e7 40%,#f0f0f0 75%,#f5f5f5 100%)"></div>
<div class="a" style="left:1px;top:199px;width:35px;height:35px;border:1px solid #999;background:linear-gradient(#fbfbfb 0,#f0f0f0 8%,#e6e6e6 22%,#e7e7e7 40%,#f0f0f0 75%,#f5f5f5 100%)"></div>
<div class="a" style="left:36px;top:199px;width:35px;height:35px;border:1px solid #999;background:linear-gradient(#fbfbfb 0,#f0f0f0 8%,#e6e6e6 22%,#e7e7e7 40%,#f0f0f0 75%,#f5f5f5 100%)"></div>
<div class="a" style="left:1px;top:234px;width:35px;height:35px;border:1px solid #999;background:linear-gradient(#fbfbfb 0,#f0f0f0 8%,#e6e6e6 22%,#e7e7e7 40%,#f0f0f0 75%,#f5f5f5 100%)"></div>
<div class="a" style="left:36px;top:234px;width:35px;height:35px;border:1px solid #999;background:linear-gradient(#fbfbfb 0,#f0f0f0 8%,#e6e6e6 22%,#e7e7e7 40%,#f0f0f0 75%,#f5f5f5 100%)"></div>
<div class="a" style="left:1px;top:269px;width:35px;height:35px;border:1px solid #999;background:linear-gradient(#fbfbfb 0,#f0f0f0 8%,#e6e6e6 22%,#e7e7e7 40%,#f0f0f0 75%,#f5f5f5 100%)"></div>
<div class="a" style="left:36px;top:269px;width:35px;height:35px;border:1px solid #999;background:linear-gradient(#fbfbfb 0,#f0f0f0 8%,#e6e6e6 22%,#e7e7e7 40%,#f0f0f0 75%,#f5f5f5 100%)"></div>
<div class="a" style="left:1px;top:312px;width:35px;height:35px;border:1px solid #999;background:linear-gradient(#fbfbfb 0,#f0f0f0 8%,#e6e6e6 22%,#e7e7e7 40%,#f0f0f0 75%,#f5f5f5 100%)"></div>
<div class="a" style="left:36px;top:312px;width:35px;height:35px;border:1px solid #999;background:linear-gradient(#fbfbfb 0,#f0f0f0 8%,#e6e6e6 22%,#e7e7e7 40%,#f0f0f0 75%,#f5f5f5 100%)"></div>
<div class="a" style="left:1px;top:355px;width:35px;height:35px;border:1px solid #999;background:linear-gradient(#fbfbfb 0,#f0f0f0 8%,#e6e6e6 22%,#e7e7e7 40%,#f0f0f0 75%,#f5f5f5 100%)"></div>
<div class="a" style="left:36px;top:355px;width:35px;height:35px;border:1px solid #999;background:linear-gradient(#fbfbfb 0,#f0f0f0 8%,#e6e6e6 22%,#e7e7e7 40%,#f0f0f0 75%,#f5f5f5 100%)"></div>
<div class="a" style="left:1px;top:398px;width:35px;height:35px;border:1px solid #999;background:linear-gradient(#fbfbfb 0,#f0f0f0 8%,#e6e6e6 22%,#e7e7e7 40%,#f0f0f0 75%,#f5f5f5 100%)"></div>
<div class="a" style="left:36px;top:398px;width:35px;height:35px;border:1px solid #999;background:linear-gradient(#fbfbfb 0,#f0f0f0 8%,#e6e6e6 22%,#e7e7e7 40%,#f0f0f0 75%,#f5f5f5 100%)"></div>
<div class="a" style="left:1px;top:484px;width:35px;height:35px;border:1px solid #999;background:linear-gradient(#fbfbfb 0,#f0f0f0 8%,#e6e6e6 22%,#e7e7e7 40%,#f0f0f0 75%,#f5f5f5 100%)"></div>
<div class="a" style="left:36px;top:484px;width:35px;height:35px;border:1px solid #999;background:linear-gradient(#fbfbfb 0,#f0f0f0 8%,#e6e6e6 22%,#e7e7e7 40%,#f0f0f0 75%,#f5f5f5 100%)"></div>
<div class="a" style="left:1px;top:527px;width:35px;height:35px;border:1px solid #999;background:linear-gradient(#fbfbfb 0,#f0f0f0 8%,#e6e6e6 22%,#e7e7e7 40%,#f0f0f0 75%,#f5f5f5 100%)"></div>
<div class="a" style="left:36px;top:527px;width:35px;height:35px;border:1px solid #999;background:linear-gradient(#fbfbfb 0,#f0f0f0 8%,#e6e6e6 22%,#e7e7e7 40%,#f0f0f0 75%,#f5f5f5 100%)"></div>
<div class="a" style="left:1px;top:570px;width:35px;height:35px;border:1px solid #999;background:linear-gradient(#fbfbfb 0,#f0f0f0 8%,#e6e6e6 22%,#e7e7e7 40%,#f0f0f0 75%,#f5f5f5 100%)"></div>
<div class="a" style="left:36px;top:613px;width:35px;height:35px;border:1px solid #999;background:linear-gradient(#fbfbfb 0,#f0f0f0 8%,#e6e6e6 22%,#e7e7e7 40%,#f0f0f0 75%,#f5f5f5 100%)"></div>
<div class="a" style="left:1px;top:648px;width:35px;height:35px;border:1px solid #999;background:linear-gradient(#fbfbfb 0,#f0f0f0 8%,#e6e6e6 22%,#e7e7e7 40%,#f0f0f0 75%,#f5f5f5 100%)"></div>
<div class="a" style="left:36px;top:648px;width:35px;height:35px;border:1px solid #999;background:linear-gradient(#fbfbfb 0,#f0f0f0 8%,#e6e6e6 22%,#e7e7e7 40%,#f0f0f0 75%,#f5f5f5 100%)"></div>
<div class="a" style="left:1px;top:683px;width:35px;height:35px;border:1px solid #999;background:linear-gradient(#fbfbfb 0,#f0f0f0 8%,#e6e6e6 22%,#e7e7e7 40%,#f0f0f0 75%,#f5f5f5 100%)"></div>
<div class="a" style="left:1px;top:726px;width:35px;height:35px;border:1px solid #999;background:linear-gradient(#fbfbfb 0,#f0f0f0 8%,#e6e6e6 22%,#e7e7e7 40%,#f0f0f0 75%,#f5f5f5 100%)"></div>
<div class="a" style="left:36px;top:726px;width:35px;height:35px;border:1px solid #999;background:linear-gradient(#fbfbfb 0,#f0f0f0 8%,#e6e6e6 22%,#e7e7e7 40%,#f0f0f0 75%,#f5f5f5 100%)"></div>
<div class="a" style="left:1px;top:769px;width:35px;height:29px;border:1px solid #999;background:linear-gradient(#fbfbfb 0,#f0f0f0 8%,#e6e6e6 22%,#e7e7e7 40%,#f0f0f0 75%,#f5f5f5 100%);border-bottom:none"></div>
<div class="a" style="left:1px;top:441px;width:35px;height:35px;border:1px solid #8f8f8f;border-radius:4px;background:linear-gradient(#b7b7b7,#c2c2c2 50%,#d0d0d0)"></div>
<div class="a" style="left:1px;top:613px;width:35px;height:35px;border:1px solid #8f8f8f;border-radius:4px;background:linear-gradient(#b7b7b7,#c2c2c2 50%,#d0d0d0)"></div>
<span class="t" style="left:7.30px;top:453.11px;font-size:10.5px;line-height:10.5px;color:#111;transform:rotate(0.03deg) scaleX(1.0648);transform-origin:0 50%;-webkit-text-stroke:0.3px #111;">Auto</span>
<svg style="left:0;top:108px" width="72" height="690" viewBox="0 108 72 690"><path d="M31.6 133L40.1 128.9V137Z" fill="#000"/><path d="M13.6 172.6H21.6M17.6 168.6V176.6" stroke="#000" stroke-width="1.0" fill="none" stroke-linecap="round" stroke-linecap="butt"/><circle cx="42.50" cy="162.50" r="1.75" fill="#ff0000"/><circle cx="42.50" cy="169.50" r="1.75" fill="#ff0000"/><circle cx="42.50" cy="176.50" r="1.75" fill="#ff0000"/><circle cx="42.50" cy="183.50" r="1.75" fill="#ff0000"/><circle cx="49.47" cy="162.50" r="1.75" fill="#ff0000"/><circle cx="49.47" cy="169.50" r="1.75" fill="#ff0000"/><circle cx="49.47" cy="176.50" r="1.75" fill="#ff0000"/><circle cx="49.47" cy="183.50" r="1.75" fill="#ff0000"/><circle cx="56.44" cy="162.50" r="1.75" fill="#ff0000"/><circle cx="56.44" cy="169.50" r="1.75" fill="#ff0000"/><circle cx="56.44" cy="176.50" r="1.75" fill="#ff0000"/><circle cx="56.44" cy="183.50" r="1.75" fill="#ff0000"/><circle cx="63.41" cy="162.50" r="1.75" fill="#ff0000"/><circle cx="63.41" cy="169.50" r="1.75" fill="#ff0000"/><circle cx="63.41" cy="176.50" r="1.75" fill="#ff0000"/><circle cx="63.41" cy="183.50" r="1.75" fill="#ff0000"/><path d="M15.81 205.36Q16.41 217.44 28.49 218.04" stroke="#1c1c1c" stroke-width="1.0" fill="none" stroke-linecap="round" /><path d="M7.55 215.22L28.49 226.50" stroke="#1c1c1c" stroke-width="1.0" fill="none" stroke-linecap="round" /><circle cx="15.81" cy="205.36" r="1.6" fill="#ff0000"/><circle cx="28.49" cy="218.04" r="1.6" fill="#ff0000"/><circle cx="7.55" cy="215.22" r="1.6" fill="#ff0000"/><circle cx="28.49" cy="226.50" r="1.6" fill="#ff0000"/><path d="M42.48 216.43L63.93 204.85" stroke="#1c1c1c" stroke-width="1.0" fill="none" stroke-linecap="round" /><circle cx="42.48" cy="216.43" r="1.6" fill="#ff0000"/><circle cx="47.52" cy="213.71" r="1.6" fill="#ff0000"/><circle cx="53.06" cy="210.89" r="1.6" fill="#ff0000"/><circle cx="58.39" cy="208.08" r="1.6" fill="#ff0000"/><circle cx="63.93" cy="204.85" r="1.6" fill="#ff0000"/><path d="M50.84 226.50Q52.25 216.12 63.42 213.71" stroke="#1c1c1c" stroke-width="1.0" fill="none" stroke-linecap="round" /><circle cx="50.84" cy="226.50" r="1.6" fill="#ff0000"/><circle cx="51.85" cy="221.47" r="1.6" fill="#ff0000"/><circle cx="54.36" cy="217.44" r="1.6" fill="#ff0000"/><circle cx="58.59" cy="215.12" r="1.6" fill="#ff0000"/><circle cx="63.42" cy="213.71" r="1.6" fill="#ff0000"/><path d="M9.36 241.06L19.13 252.13" stroke="#1c1c1c" stroke-width="1.1" fill="none" stroke-linecap="round" /><path d="M28.69 248.61Q18.62 251.13 15.60 261.70" stroke="#1c1c1c" stroke-width="1.1" fill="none" stroke-linecap="round" /><path d="M16.31 247.30Q20.13 244.28 24.16 248.91" stroke="#333" stroke-width="0.6" fill="none" stroke-linecap="round" /><circle cx="19.73" cy="248.11" r="0.4" fill="#333"/><circle cx="19.43" cy="252.44" r="1.6" fill="#ff0000"/><circle cx="56.68" cy="248.11" r="6.7" fill="none" stroke="#1c1c1c" stroke-width="1.1"/><path d="M43.09 259.69L50.84 245.29" stroke="#1c1c1c" stroke-width="1.1" fill="none" stroke-linecap="round" /><circle cx="50.84" cy="245.29" r="1.6" fill="#ff0000"/><path d="M6.54 286.67L28.69 275.49" stroke="#1c1c1c" stroke-width="1.1" fill="none" stroke-linecap="round" /><path d="M28.69 283.34Q16.61 283.85 15.30 296.43" stroke="#1c1c1c" stroke-width="1.1" fill="none" stroke-linecap="round" /><circle cx="17.62" cy="281.13" r="1.6" fill="#ff0000"/><circle cx="27.99" cy="296.03" r="1.8" fill="#ff0000"/><circle cx="53.06" cy="286.06" r="9.9" fill="none" stroke="#1c1c1c" stroke-width="1"/><circle cx="53.06" cy="286.06" r="1.75" fill="#ff0000"/><circle cx="53.06" cy="276.16" r="1.75" fill="#ff0000"/><circle cx="53.06" cy="295.96" r="1.75" fill="#ff0000"/><circle cx="43.16" cy="286.06" r="1.75" fill="#ff0000"/><circle cx="62.96" cy="286.06" r="1.75" fill="#ff0000"/><path d="M7.05 329.65L28.99 318.07" stroke="#1c1c1c" stroke-width="1.1" fill="none" stroke-linecap="round" /><path d="M28.99 326.42Q18.12 327.63 15.60 339.51" stroke="#1c1c1c" stroke-width="1.1" fill="none" stroke-linecap="round" /><circle cx="17.92" cy="323.91" r="1.6" fill="#ff0000"/><circle cx="19.43" cy="330.35" r="1.6" fill="#ff0000"/><rect x="41.28" y="319.48" width="23.16" height="18.73" fill="#f0f0f0" stroke="#3a3a3a" stroke-width="1.1"/><path d="M43.79 335.69L63.42 320.58" stroke="#8a8a8a" stroke-width="0.7" fill="none" stroke-linecap="round" stroke-dasharray="1.6 1.6"/><circle cx="52.85" cy="328.94" r="1.6" fill="#ff0000"/><path d="M8.05 372.43L29.20 361.36" stroke="#1c1c1c" stroke-width="1.1" fill="none" stroke-linecap="round" /><path d="M29.20 369.41Q18.62 370.92 16.31 382.50" stroke="#1c1c1c" stroke-width="1.1" fill="none" stroke-linecap="round" /><circle cx="15.10" cy="368.71" r="1.6" fill="#ff0000"/><circle cx="19.13" cy="374.14" r="1.6" fill="#ff0000"/><path d="M6.24 368.40L11.07 366.19" stroke="#000" stroke-width="1.7" fill="none" stroke-linecap="round" /><path d="M13.29 364.98L9.26 365.18L10.87 368.20Z" fill="#000"/><path d="M20.64 382.30L21.95 377.97" stroke="#000" stroke-width="1.7" fill="none" stroke-linecap="round" /><path d="M22.55 375.85L19.93 378.87L23.36 379.68Z" fill="#000"/><path d="M42.28 372.43L63.93 360.85" stroke="#1c1c1c" stroke-width="0.9" fill="none" stroke-linecap="round" stroke-dasharray="2 2"/><circle cx="49.83" cy="368.71" r="1.6" fill="#ff0000"/><circle cx="63.93" cy="360.85" r="1.0" fill="#000"/><circle cx="42.28" cy="372.94" r="1.0" fill="#000"/><path d="M41.28 368.40L45.30 366.69" stroke="#000" stroke-width="1.7" fill="none" stroke-linecap="round" /><path d="M47.92 365.49L43.89 365.59L45.30 368.61Z" fill="#000"/><text x="60.71" y="374.45" font-family="Liberation Sans, sans-serif" font-size="10.5" fill="#111">2</text><text x="40.27" y="384.31" font-family="Liberation Sans, sans-serif" font-size="10.5" fill="#111">1</text><path d="M5.54 412.33L30.20 419.88" stroke="#1c1c1c" stroke-width="1.1" fill="none" stroke-linecap="round" /><path d="M24.46 402.77L18.42 427.03" stroke="#1c1c1c" stroke-width="1.1" fill="none" stroke-linecap="round" /><circle cx="20.94" cy="417.16" r="1.6" fill="#ff0000"/><path d="M43.09 416.46L53.36 419.78" stroke="#1c1c1c" stroke-width="1.1" fill="none" stroke-linecap="round" /><path d="M62.62 406.59L60.10 416.86" stroke="#1c1c1c" stroke-width="1.1" fill="none" stroke-linecap="round" /><circle cx="58.69" cy="421.49" r="1.75" fill="#ff0000"/><path d="M14.90 489.28V504.68H30.71" stroke="#555" stroke-width="1.2" fill="none" stroke-linecap="round" stroke-linecap="butt"/><text x="6.64" y="495.32" font-family="Liberation Sans, sans-serif" font-size="11" fill="#111">y</text><text x="24.46" y="512.73" font-family="Liberation Sans, sans-serif" font-size="11" fill="#111">x</text><circle cx="27.99" cy="490.89" r="1.6" fill="#ff0000"/><path d="M40.77 510.22L57.59 493.60Q64.43 501.16 64.94 510.22Z" stroke="#1c1c1c" stroke-width="1.0" fill="none" stroke-linecap="round" stroke-linejoin="round"/><path d="M40.77 510.22H64.94" stroke="#444" stroke-width="1.4" fill="none" stroke-linecap="round" /><text x="44.30" y="499.95" font-family="Liberation Sans, sans-serif" font-size="11" fill="#111">r</text><text x="54.67" y="506.69" font-family="Liberation Sans, sans-serif" font-size="10.5" fill="#111">a</text><circle cx="57.59" cy="493.60" r="1.6" fill="#ff0000"/><path d="M9.77 535.89H25.97M9.77 535.89V552.20" stroke="#b5b5b5" stroke-width="0.8" fill="none" stroke-linecap="round" /><circle cx="9.77" cy="535.89" r="2.3" fill="#ff0000"/><circle cx="25.97" cy="535.89" r="1.1" fill="#000"/><circle cx="9.77" cy="552.20" r="1.1" fill="#000"/><text x="23.46" y="546.46" font-family="Liberation Sans, sans-serif" font-size="10.5" fill="#111">2</text><text x="13.59" y="554.31" font-family="Liberation Sans, sans-serif" font-size="10.5" fill="#111">1</text><path d="M44.80 552.20H60.91V535.89" stroke="#b5b5b5" stroke-width="0.8" fill="none" stroke-linecap="round" /><circle cx="60.91" cy="552.20" r="2.3" fill="#ff0000"/><circle cx="60.91" cy="535.89" r="1.1" fill="#000"/><circle cx="44.80" cy="552.20" r="1.1" fill="#000"/><text x="53.06" y="540.62" font-family="Liberation Sans, sans-serif" font-size="10.5" fill="#111">2</text><text x="42.48" y="548.27" font-family="Liberation Sans, sans-serif" font-size="10.5" fill="#111">1</text><path d="M9.56 577.60H29.20V596.22H14.09V591.69H6.85V580.62Q6.85 577.60 9.56 577.60Z" stroke="#f2b8b8" stroke-width="0.8" fill="none" stroke-linecap="round" /><circle cx="13.59" cy="584.65" r="3.4" fill="none" stroke="#f0a8a8" stroke-width="0.8"/><path d="M17.62 591.69L24.67 583.64V591.69Z" stroke="#f0a8a8" stroke-width="0.8" fill="none" stroke-linecap="round" /><circle cx="17.92" cy="586.96" r="1.75" fill="#ff0000"/><path d="M14.60 629.95H21.85M18.22 626.42V633.67" stroke="#222" stroke-width="1.0" fill="none" stroke-linecap="round" stroke-linecap="butt"/><path d="M40.77 629.45H64.13M52.45 617.87V641.22" stroke="#000" stroke-width="1.0" fill="none" stroke-linecap="round" stroke-linecap="butt"/><circle cx="52.45" cy="629.45" r="3.4" fill="none" stroke="#ff0000" stroke-width="0.9"/><path d="M49.05 629.45H55.85M52.45 626.05V632.85" stroke="#ff0000" stroke-width="0.9"/><path d="M5.84 664.43H29.40" stroke="#000" stroke-width="1.0" fill="none" stroke-linecap="round" stroke-linecap="butt"/><circle cx="17.62" cy="664.43" r="3.4" fill="none" stroke="#ff0000" stroke-width="0.9"/><path d="M14.22 664.43H21.02M17.62 661.03V667.83" stroke="#ff0000" stroke-width="0.9"/><path d="M52.45 652.85V676.41" stroke="#000" stroke-width="1.0" fill="none" stroke-linecap="round" stroke-linecap="butt"/><circle cx="52.45" cy="664.43" r="3.4" fill="none" stroke="#ff0000" stroke-width="0.9"/><path d="M49.05 664.43H55.85M52.45 661.03V667.83" stroke="#ff0000" stroke-width="0.9"/><path d="M9.26 688.09L9.46 692.52" stroke="#777" stroke-width="0.8" fill="none" stroke-linecap="round" /><path d="M15.10 688.79L13.89 693.12" stroke="#777" stroke-width="0.8" fill="none" stroke-linecap="round" /><path d="M20.13 691.31L17.92 695.14" stroke="#777" stroke-width="0.8" fill="none" stroke-linecap="round" /><path d="M24.16 694.53L21.34 697.85" stroke="#777" stroke-width="0.8" fill="none" stroke-linecap="round" /><path d="M29.70 704.20L25.17 705.61" stroke="#777" stroke-width="0.8" fill="none" stroke-linecap="round" /><path d="M29.80 710.14L25.17 710.14" stroke="#777" stroke-width="0.8" fill="none" stroke-linecap="round" /><path d="M8.86 708.93L27.18 698.36" stroke="#111" stroke-width="1.1" fill="none" stroke-linecap="round" /><circle cx="8.86" cy="708.93" r="3.6" fill="none" stroke="#ff0000" stroke-width="0.9"/><path d="M5.26 708.93H12.46M8.86 705.33V712.53" stroke="#ff0000" stroke-width="0.9"/><circle cx="14.90" cy="737.11" r="3.6" fill="none" stroke="#ff0000" stroke-width="0.9"/><path d="M11.30 737.11H18.50M14.90 733.51V740.71" stroke="#ff0000" stroke-width="0.9"/><path d="M16.31 739.13V750.00L18.93 747.18L20.94 752.01L22.95 751.01L20.94 746.38L23.96 745.97Z" fill="#fff" stroke="#6a6a6a" stroke-width="0.9" stroke-linejoin="round"/><ellipse cx="46.31" cy="738.32" rx="2.4" ry="3.9" fill="none" stroke="#000" stroke-width="1.2"/><path d="M48.91 737.52H61.71V742.62H59.81V740.92H59.01V742.12H57.01V739.22H48.91Z" fill="#000"/><circle cx="52.45" cy="750.50" r="3.4" fill="none" stroke="#ff0000" stroke-width="0.9"/><path d="M49.05 750.50H55.85M52.45 747.10V753.90" stroke="#ff0000" stroke-width="0.9"/><ellipse cx="11.07" cy="785.24" rx="2.4" ry="3.9" fill="none" stroke="#000" stroke-width="1.2"/><path d="M13.67 784.44H26.47V789.54H24.57V787.84H23.77V789.04H21.77V786.14H13.67Z" fill="#000"/></svg>
<svg style="left:72px;top:132px" width="1083" height="618" viewBox="72 132 1083 618" font-family="Liberation Sans, sans-serif" font-size="9.8" fill="#111" stroke="#111" stroke-width="0.28"><defs><clipPath id="ct"><rect x="95" y="132" width="1043" height="23"/></clipPath><clipPath id="cl"><rect x="72" y="155" width="23" height="577"/></clipPath></defs><g clip-path="url(#ct)"><text x="96.4" y="141" text-anchor="middle" transform="rotate(0.03 96.4 141)" textLength="8.06" lengthAdjust="spacingAndGlyphs">-2</text><text x="116.4" y="141" text-anchor="middle" transform="rotate(0.03 116.4 141)" textLength="5.04" lengthAdjust="spacingAndGlyphs">0</text><text x="136.4" y="141" text-anchor="middle" transform="rotate(0.03 136.4 141)" textLength="5.04" lengthAdjust="spacingAndGlyphs">2</text><text x="156.4" y="141" text-anchor="middle" transform="rotate(0.03 156.4 141)" textLength="5.04" lengthAdjust="spacingAndGlyphs">4</text><text x="176.4" y="141" text-anchor="middle" transform="rotate(0.03 176.4 141)" textLength="5.04" lengthAdjust="spacingAndGlyphs">6</text><text x="196.4" y="141" text-anchor="middle" transform="rotate(0.03 196.4 141)" textLength="5.04" lengthAdjust="spacingAndGlyphs">8</text><text x="216.4" y="141" text-anchor="middle" transform="rotate(0.03 216.4 141)" textLength="10.08" lengthAdjust="spacingAndGlyphs">10</text><text x="236.4" y="141" text-anchor="middle" transform="rotate(0.03 236.4 141)" textLength="10.08" lengthAdjust="spacingAndGlyphs">12</text><text x="256.4" y="141" text-anchor="middle" transform="rotate(0.03 256.4 141)" textLength="10.08" lengthAdjust="spacingAndGlyphs">14</text><text x="276.4" y="141" text-anchor="middle" transform="rotate(0.03 276.4 141)" textLength="10.08" lengthAdjust="spacingAndGlyphs">16</text><text x="296.4" y="141" text-anchor="middle" transform="rotate(0.03 296.4 141)" textLength="10.08" lengthAdjust="spacingAndGlyphs">18</text><text x="316.4" y="141" text-anchor="middle" transform="rotate(0.03 316.4 141)" textLength="10.08" lengthAdjust="spacingAndGlyphs">20</text><text x="336.4" y="141" text-anchor="middle" transform="rotate(0.03 336.4 141)" textLength="10.08" lengthAdjust="spacingAndGlyphs">22</text><text x="356.4" y="141" text-anchor="middle" transform="rotate(0.03 356.4 141)" textLength="10.08" lengthAdjust="spacingAndGlyphs">24</text><text x="376.4" y="141" text-anchor="middle" transform="rotate(0.03 376.4 141)" textLength="10.08" lengthAdjust="spacingAndGlyphs">26</text><text x="396.4" y="141" text-anchor="middle" transform="rotate(0.03 396.4 141)" textLength="10.08" lengthAdjust="spacingAndGlyphs">28</text><text x="416.4" y="141" text-anchor="middle" transform="rotate(0.03 416.4 141)" textLength="10.08" lengthAdjust="spacingAndGlyphs">30</text><text x="436.4" y="141" text-anchor="middle" transform="rotate(0.03 436.4 141)" textLength="10.08" lengthAdjust="spacingAndGlyphs">32</text><text x="456.4" y="141" text-anchor="middle" transform="rotate(0.03 456.4 141)" textLength="10.08" lengthAdjust="spacingAndGlyphs">34</text><text x="476.4" y="141" text-anchor="middle" transform="rotate(0.03 476.4 141)" textLength="10.08" lengthAdjust="spacingAndGlyphs">36</text><text x="496.4" y="141" text-anchor="middle" transform="rotate(0.03 496.4 141)" textLength="10.08" lengthAdjust="spacingAndGlyphs">38</text><text x="516.4" y="141" text-anchor="middle" transform="rotate(0.03 516.4 141)" textLength="10.08" lengthAdjust="spacingAndGlyphs">40</text><text x="536.4" y="141" text-anchor="middle" transform="rotate(0.03 536.4 141)" textLength="10.08" lengthAdjust="spacingAndGlyphs">42</text><text x="556.4" y="141" text-anchor="middle" transform="rotate(0.03 556.4 141)" textLength="10.08" lengthAdjust="spacingAndGlyphs">44</text><text x="576.4" y="141" text-anchor="middle" transform="rotate(0.03 576.4 141)" textLength="10.08" lengthAdjust="spacingAndGlyphs">46</text><text x="596.4" y="141" text-anchor="middle" transform="rotate(0.03 596.4 141)" textLength="10.08" lengthAdjust="spacingAndGlyphs">48</text><text x="616.4" y="141" text-anchor="middle" transform="rotate(0.03 616.4 141)" textLength="10.08" lengthAdjust="spacingAndGlyphs">50</text><text x="636.4" y="141" text-anchor="middle" transform="rotate(0.03 636.4 141)" textLength="10.08" lengthAdjust="spacingAndGlyphs">52</text><text x="656.4" y="141" text-anchor="middle" transform="rotate(0.03 656.4 141)" textLength="10.08" lengthAdjust="spacingAndGlyphs">54</text><text x="676.4" y="141" text-anchor="middle" transform="rotate(0.03 676.4 141)" textLength="10.08" lengthAdjust="spacingAndGlyphs">56</text><text x="696.4" y="141" text-anchor="middle" transform="rotate(0.03 696.4 141)" textLength="10.08" lengthAdjust="spacingAndGlyphs">58</text><text x="716.4" y="141" text-anchor="middle" transform="rotate(0.03 716.4 141)" textLength="10.08" lengthAdjust="spacingAndGlyphs">60</text><text x="736.4" y="141" text-anchor="middle" transform="rotate(0.03 736.4 141)" textLength="10.08" lengthAdjust="spacingAndGlyphs">62</text><text x="756.4" y="141" text-anchor="middle" transform="rotate(0.03 756.4 141)" textLength="10.08" lengthAdjust="spacingAndGlyphs">64</text><text x="776.4" y="141" text-anchor="middle" transform="rotate(0.03 776.4 141)" textLength="10.08" lengthAdjust="spacingAndGlyphs">66</text><text x="796.4" y="141" text-anchor="middle" transform="rotate(0.03 796.4 141)" textLength="10.08" lengthAdjust="spacingAndGlyphs">68</text><text x="816.4" y="141" text-anchor="middle" transform="rotate(0.03 816.4 141)" textLength="10.08" lengthAdjust="spacingAndGlyphs">70</text><text x="836.4" y="141" text-anchor="middle" transform="rotate(0.03 836.4 141)" textLength="10.08" lengthAdjust="spacingAndGlyphs">72</text><text x="856.4" y="141" text-anchor="middle" transform="rotate(0.03 856.4 141)" textLength="10.08" lengthAdjust="spacingAndGlyphs">74</text><text x="876.4" y="141" text-anchor="middle" transform="rotate(0.03 876.4 141)" textLength="10.08" lengthAdjust="spacingAndGlyphs">76</text><text x="896.4" y="141" text-anchor="middle" transform="rotate(0.03 896.4 141)" textLength="10.08" lengthAdjust="spacingAndGlyphs">78</text><text x="916.4" y="141" text-anchor="middle" transform="rotate(0.03 916.4 141)" textLength="10.08" lengthAdjust="spacingAndGlyphs">80</text><text x="936.4" y="141" text-anchor="middle" transform="rotate(0.03 936.4 141)" textLength="10.08" lengthAdjust="spacingAndGlyphs">82</text><text x="956.4" y="141" text-anchor="middle" transform="rotate(0.03 956.4 141)" textLength="10.08" lengthAdjust="spacingAndGlyphs">84</text><text x="976.4" y="141" text-anchor="middle" transform="rotate(0.03 976.4 141)" textLength="10.08" lengthAdjust="spacingAndGlyphs">86</text><text x="996.4" y="141" text-anchor="middle" transform="rotate(0.03 996.4 141)" textLength="10.08" lengthAdjust="spacingAndGlyphs">88</text><text x="1016.4" y="141" text-anchor="middle" transform="rotate(0.03 1016.4 141)" textLength="10.08" lengthAdjust="spacingAndGlyphs">90</text><text x="1036.4" y="141" text-anchor="middle" transform="rotate(0.03 1036.4 141)" textLength="10.08" lengthAdjust="spacingAndGlyphs">92</text><text x="1056.4" y="141" text-anchor="middle" transform="rotate(0.03 1056.4 141)" textLength="10.08" lengthAdjust="spacingAndGlyphs">94</text><text x="1076.4" y="141" text-anchor="middle" transform="rotate(0.03 1076.4 141)" textLength="10.08" lengthAdjust="spacingAndGlyphs">96</text><text x="1096.4" y="141" text-anchor="middle" transform="rotate(0.03 1096.4 141)" textLength="10.08" lengthAdjust="spacingAndGlyphs">98</text><text x="1116.4" y="141" text-anchor="middle" transform="rotate(0.03 1116.4 141)" textLength="14.14" lengthAdjust="spacingAndGlyphs">100</text><text x="1136.4" y="141" text-anchor="middle" transform="rotate(0.03 1136.4 141)" textLength="14.14" lengthAdjust="spacingAndGlyphs">102</text><path d="M86.4 152.3V155M96.4 148V155M106.4 152.3V155M116.4 148V155M126.4 152.3V155M136.4 148V155M146.4 152.3V155M156.4 148V155M166.4 152.3V155M176.4 148V155M186.4 152.3V155M196.4 148V155M206.4 152.3V155M216.4 148V155M226.4 152.3V155M236.4 148V155M246.4 152.3V155M256.4 148V155M266.4 152.3V155M276.4 148V155M286.4 152.3V155M296.4 148V155M306.4 152.3V155M316.4 148V155M326.4 152.3V155M336.4 148V155M346.4 152.3V155M356.4 148V155M366.4 152.3V155M376.4 148V155M386.4 152.3V155M396.4 148V155M406.4 152.3V155M416.4 148V155M426.4 152.3V155M436.4 148V155M446.4 152.3V155M456.4 148V155M466.4 152.3V155M476.4 148V155M486.4 152.3V155M496.4 148V155M506.4 152.3V155M516.4 148V155M526.4 152.3V155M536.4 148V155M546.4 152.3V155M556.4 148V155M566.4 152.3V155M576.4 148V155M586.4 152.3V155M596.4 148V155M606.4 152.3V155M616.4 148V155M626.4 152.3V155M636.4 148V155M646.4 152.3V155M656.4 148V155M666.4 152.3V155M676.4 148V155M686.4 152.3V155M696.4 148V155M706.4 152.3V155M716.4 148V155M726.4 152.3V155M736.4 148V155M746.4 152.3V155M756.4 148V155M766.4 152.3V155M776.4 148V155M786.4 152.3V155M796.4 148V155M806.4 152.3V155M816.4 148V155M826.4 152.3V155M836.4 148V155M846.4 152.3V155M856.4 148V155M866.4 152.3V155M876.4 148V155M886.4 152.3V155M896.4 148V155M906.4 152.3V155M916.4 148V155M926.4 152.3V155M936.4 148V155M946.4 152.3V155M956.4 148V155M966.4 152.3V155M976.4 148V155M986.4 152.3V155M996.4 148V155M1006.4 152.3V155M1016.4 148V155M1026.4 152.3V155M1036.4 148V155M1046.4 152.3V155M1056.4 148V155M1066.4 152.3V155M1076.4 148V155M1086.4 152.3V155M1096.4 148V155M1106.4 152.3V155M1116.4 148V155M1126.4 152.3V155M1136.4 148V155M1146.4 152.3V155" stroke="#606060" stroke-width="1" fill="none"/></g><g clip-path="url(#cl)"><text transform="translate(81.4 743.4) rotate(-90)" text-anchor="middle" stroke-width="0.1" textLength="13.10" lengthAdjust="spacingAndGlyphs">-20</text><text transform="translate(81.4 723.4) rotate(-90)" text-anchor="middle" stroke-width="0.1" textLength="13.10" lengthAdjust="spacingAndGlyphs">-18</text><text transform="translate(81.4 703.4) rotate(-90)" text-anchor="middle" stroke-width="0.1" textLength="13.10" lengthAdjust="spacingAndGlyphs">-16</text><text transform="translate(81.4 683.4) rotate(-90)" text-anchor="middle" stroke-width="0.1" textLength="13.10" lengthAdjust="spacingAndGlyphs">-14</text><text transform="translate(81.4 663.4) rotate(-90)" text-anchor="middle" stroke-width="0.1" textLength="13.10" lengthAdjust="spacingAndGlyphs">-12</text><text transform="translate(81.4 643.4) rotate(-90)" text-anchor="middle" stroke-width="0.1" textLength="13.10" lengthAdjust="spacingAndGlyphs">-10</text><text transform="translate(81.4 623.4) rotate(-90)" text-anchor="middle" stroke-width="0.1" textLength="8.06" lengthAdjust="spacingAndGlyphs">-8</text><text transform="translate(81.4 603.4) rotate(-90)" text-anchor="middle" stroke-width="0.1" textLength="8.06" lengthAdjust="spacingAndGlyphs">-6</text><text transform="translate(81.4 583.4) rotate(-90)" text-anchor="middle" stroke-width="0.1" textLength="8.06" lengthAdjust="spacingAndGlyphs">-4</text><text transform="translate(81.4 563.4) rotate(-90)" text-anchor="middle" stroke-width="0.1" textLength="8.06" lengthAdjust="spacingAndGlyphs">-2</text><text transform="translate(81.4 543.4) rotate(-90)" text-anchor="middle" stroke-width="0.1" textLength="5.04" lengthAdjust="spacingAndGlyphs">0</text><text transform="translate(81.4 523.4) rotate(-90)" text-anchor="middle" stroke-width="0.1" textLength="5.04" lengthAdjust="spacingAndGlyphs">2</text><text transform="translate(81.4 503.4) rotate(-90)" text-anchor="middle" stroke-width="0.1" textLength="5.04" lengthAdjust="spacingAndGlyphs">4</text><text transform="translate(81.4 483.4) rotate(-90)" text-anchor="middle" stroke-width="0.1" textLength="5.04" lengthAdjust="spacingAndGlyphs">6</text><text transform="translate(81.4 463.4) rotate(-90)" text-anchor="middle" stroke-width="0.1" textLength="5.04" lengthAdjust="spacingAndGlyphs">8</text><text transform="translate(81.4 443.4) rotate(-90)" text-anchor="middle" stroke-width="0.1" textLength="10.08" lengthAdjust="spacingAndGlyphs">10</text><text transform="translate(81.4 423.4) rotate(-90)" text-anchor="middle" stroke-width="0.1" textLength="10.08" lengthAdjust="spacingAndGlyphs">12</text><text transform="translate(81.4 403.4) rotate(-90)" text-anchor="middle" stroke-width="0.1" textLength="10.08" lengthAdjust="spacingAndGlyphs">14</text><text transform="translate(81.4 383.4) rotate(-90)" text-anchor="middle" stroke-width="0.1" textLength="10.08" lengthAdjust="spacingAndGlyphs">16</text><text transform="translate(81.4 363.4) rotate(-90)" text-anchor="middle" stroke-width="0.1" textLength="10.08" lengthAdjust="spacingAndGlyphs">18</text><text transform="translate(81.4 343.4) rotate(-90)" text-anchor="middle" stroke-width="0.1" textLength="10.08" lengthAdjust="spacingAndGlyphs">20</text><text transform="translate(81.4 323.4) rotate(-90)" text-anchor="middle" stroke-width="0.1" textLength="10.08" lengthAdjust="spacingAndGlyphs">22</text><text transform="translate(81.4 303.4) rotate(-90)" text-anchor="middle" stroke-width="0.1" textLength="10.08" lengthAdjust="spacingAndGlyphs">24</text><text transform="translate(81.4 283.4) rotate(-90)" text-anchor="middle" stroke-width="0.1" textLength="10.08" lengthAdjust="spacingAndGlyphs">26</text><text transform="translate(81.4 263.4) rotate(-90)" text-anchor="middle" stroke-width="0.1" textLength="10.08" lengthAdjust="spacingAndGlyphs">28</text><text transform="translate(81.4 243.4) rotate(-90)" text-anchor="middle" stroke-width="0.1" textLength="10.08" lengthAdjust="spacingAndGlyphs">30</text><text transform="translate(81.4 223.4) rotate(-90)" text-anchor="middle" stroke-width="0.1" textLength="10.08" lengthAdjust="spacingAndGlyphs">32</text><text transform="translate(81.4 203.4) rotate(-90)" text-anchor="middle" stroke-width="0.1" textLength="10.08" lengthAdjust="spacingAndGlyphs">34</text><text transform="translate(81.4 183.4) rotate(-90)" text-anchor="middle" stroke-width="0.1" textLength="10.08" lengthAdjust="spacingAndGlyphs">36</text><text transform="translate(81.4 163.4) rotate(-90)" text-anchor="middle" stroke-width="0.1" textLength="10.08" lengthAdjust="spacingAndGlyphs">38</text><path d="M88.2 743.4H95M92.2 733.4H95M88.2 723.4H95M92.2 713.4H95M88.2 703.4H95M92.2 693.4H95M88.2 683.4H95M92.2 673.4H95M88.2 663.4H95M92.2 653.4H95M88.2 643.4H95M92.2 633.4H95M88.2 623.4H95M92.2 613.4H95M88.2 603.4H95M92.2 593.4H95M88.2 583.4H95M92.2 573.4H95M88.2 563.4H95M92.2 553.4H95M88.2 543.4H95M92.2 533.4H95M88.2 523.4H95M92.2 513.4H95M88.2 503.4H95M92.2 493.4H95M88.2 483.4H95M92.2 473.4H95M88.2 463.4H95M92.2 453.4H95M88.2 443.4H95M92.2 433.4H95M88.2 423.4H95M92.2 413.4H95M88.2 403.4H95M92.2 393.4H95M88.2 383.4H95M92.2 373.4H95M88.2 363.4H95M92.2 353.4H95M88.2 343.4H95M92.2 333.4H95M88.2 323.4H95M92.2 313.4H95M88.2 303.4H95M92.2 293.4H95M88.2 283.4H95M92.2 273.4H95M88.2 263.4H95M92.2 253.4H95M88.2 243.4H95M92.2 233.4H95M88.2 223.4H95M92.2 213.4H95M88.2 203.4H95M92.2 193.4H95M88.2 183.4H95M92.2 173.4H95M88.2 163.4H95M92.2 153.4H95" stroke="#606060" stroke-width="1" fill="none"/></g><path d="M981 144.7H992.4L986.7 151.3Z" fill="#000"/><path d="M84.9 377.5V389.1L90.9 383.3Z" fill="#000"/></svg>
<svg style="left:95px;top:155px;background:#000" width="1043" height="577" viewBox="95 155 1043 577"><defs><clipPath id="cc"><rect x="95" y="155" width="1043" height="577"/></clipPath><pattern id="gd" x="115.80" y="542.80" width="10" height="10" patternUnits="userSpaceOnUse"><rect x="0" y="0" width="1.2" height="1.2" fill="#383838"/></pattern><radialGradient id="glow" cx="0.5" cy="0.5" r="0.5"><stop offset="0" stop-color="#000" stop-opacity="0.35"/><stop offset="0.72" stop-color="#000" stop-opacity="0.4"/><stop offset="0.79" stop-color="#1c2630" stop-opacity="0.75"/><stop offset="0.86" stop-color="#3c4c5c" stop-opacity="0.85"/><stop offset="0.93" stop-color="#5c6e80" stop-opacity="0.9"/><stop offset="0.975" stop-color="#76889a" stop-opacity="0.85"/><stop offset="1" stop-color="#5a6a7a" stop-opacity="0"/></radialGradient></defs><g clip-path="url(#cc)"><path d="M16.4 155V732M116.4 155V732M216.4 155V732M316.4 155V732M416.4 155V732M516.4 155V732M616.4 155V732M716.4 155V732M816.4 155V732M916.4 155V732M1016.4 155V732M1116.4 155V732M95 743.4H1138M95 643.4H1138M95 543.4H1138M95 443.4H1138M95 343.4H1138M95 243.4H1138" stroke="#1f1f1f" stroke-width="1" fill="none"/><rect x="95" y="155" width="1043" height="577" fill="url(#gd)"/><path d="M96.4 543.4H136.4M116.4 523.4V563.4" stroke="#a00000" stroke-width="1" fill="none"/><path d="M195.6 443.4L1037.8 443.4" stroke="#ff1010" stroke-width="1.35" stroke-dasharray="17.6 7.2 1 7.2" stroke-dashoffset="0.4" fill="none"/><path d="M316.4 323.1L316.4 563.9" stroke="#ff1010" stroke-width="1.35" stroke-dasharray="17.6 7.2 1 7.2" stroke-dashoffset="4.0" fill="none"/><path d="M916.4 323.1L916.4 563.9" stroke="#ff1010" stroke-width="1.35" stroke-dasharray="17.6 7.2 1 7.2" stroke-dashoffset="4.0" fill="none"/><circle cx="316.4" cy="443.4" r="40" fill="none" stroke="#fff" stroke-width="2.9"/><circle cx="916.4" cy="443.4" r="40" fill="none" stroke="#fff" stroke-width="2.9"/><text transform="translate(426.2 533.2) rotate(-90)" font-family="Liberation Sans, sans-serif" font-size="29.8" fill="#fff" stroke="#fff" stroke-width="0.2" textLength="181" lengthAdjust="spacingAndGlyphs">104.245.02.4B</text><path d="M216.4 343.4H1016.4V543.4H216.4Z" stroke="#7e3c3c" stroke-width="2.4" fill="none"/><path d="M216.4 343.4L986.6 383L1016.4 543.4" stroke="#7e3c3c" stroke-width="2.4" fill="none" stroke-linejoin="round"/><path d="M95 383.5H1138M986.5 155V732" stroke="#9c7400" stroke-width="1" stroke-dasharray="4 1.4" fill="none"/><rect x="211.4" y="338.4" width="10" height="10" fill="#c4102c" stroke="#c06070" stroke-width="1"/><rect x="1011.4" y="538.4" width="10" height="10" fill="#c4102c" stroke="#c06070" stroke-width="1"/><rect x="211.4" y="538.4" width="10" height="10" fill="#0000b4" stroke="#8686a8" stroke-width="1"/><rect x="1011.4" y="338.4" width="10" height="10" fill="#0000b4" stroke="#8686a8" stroke-width="1"/><path d="M1011.4 343.4h10M1016.4 338.4v10" stroke="#98203c" stroke-width="1.5" fill="none"/><g opacity="0.92"><circle cx="988.8" cy="379.9" r="35.2" fill="none" stroke="#2e3e4e" stroke-opacity="0.55" stroke-width="8.4"/><circle cx="988.8" cy="379.9" r="31.0" fill="none" stroke="#1c2630" stroke-opacity="0.5" stroke-width="1.2"/><circle cx="988.8" cy="379.9" r="32.4" fill="none" stroke="#2c3a48" stroke-opacity="0.7" stroke-width="1.1"/><circle cx="988.8" cy="379.9" r="33.8" fill="none" stroke="#3e5062" stroke-opacity="0.8" stroke-width="1.1"/><circle cx="988.8" cy="379.9" r="35.2" fill="none" stroke="#52677c" stroke-opacity="0.9" stroke-width="1.1"/><circle cx="988.8" cy="379.9" r="36.6" fill="none" stroke="#677f94" stroke-opacity="0.95" stroke-width="1.1"/><circle cx="988.8" cy="379.9" r="37.9" fill="none" stroke="#7a93a8" stroke-opacity="1" stroke-width="1.1"/><circle cx="988.8" cy="379.9" r="39.0" fill="none" stroke="#6a8196" stroke-opacity="0.8" stroke-width="0.9"/></g><circle cx="986.8" cy="383.6" r="4.6" fill="none" stroke="#c88a00" stroke-width="1"/><path d="M986.6 383.4L1016.4 543.4" stroke="#7e3c3c" stroke-width="2.4" fill="none" opacity="0.9"/><path d="M216.4 343.4L986.6 383" stroke="#7e3c3c" stroke-width="2.4" fill="none" opacity="0.6"/><path d="M973.4 379.9H1004.6M989 364.2V395.6" stroke="#b8b8b8" stroke-width="3.6" fill="none"/><circle cx="988.9" cy="380" r="1.6" fill="#000"/><text x="994.4" y="401.9" font-family="Liberation Sans, sans-serif" font-size="14.3" fill="#f6c018" textLength="26.2" lengthAdjust="spacingAndGlyphs">Grid</text></g></svg>
<div class="a" style="left:1155px;top:108px;width:300px;height:690px;background:#fff"></div>
<div class="a" style="left:1154px;top:108px;width:2px;height:690px;background:linear-gradient(90deg,#c6c6c6,#b2b2b2)"></div>
<div class="a" style="left:1155px;top:108px;width:299px;height:22px;background:linear-gradient(#ebebeb,#d9d9d9)"></div>
<div class="a" style="left:1155px;top:130px;width:299px;height:1px;background:#b8b8b8"></div>
<div class="a" style="left:1155px;top:131px;width:299px;height:25px;background:#b4b4b4"></div>
<div class="a" style="left:1156px;top:131px;width:58px;height:24px;background:linear-gradient(#e8e8e8,#f1f1f1 50%,#f7f7f7)"></div>
<div class="a" style="left:1216px;top:131px;width:58px;height:24px;background:linear-gradient(#e8e8e8,#f1f1f1 50%,#f7f7f7)"></div>
<div class="a" style="left:1276px;top:131px;width:58px;height:24px;background:linear-gradient(#e8e8e8,#f1f1f1 50%,#f7f7f7)"></div>
<div class="a" style="left:1336px;top:131px;width:58px;height:24px;background:linear-gradient(#e8e8e8,#f1f1f1 50%,#f7f7f7)"></div>
<div class="a" style="left:1396px;top:131px;width:58px;height:24px;background:linear-gradient(#e8e8e8,#f1f1f1 50%,#f7f7f7)"></div>
<div class="a" style="left:1155px;top:155px;width:299px;height:2px;background:#b9b9b9"></div>
<div class="a" style="left:1454px;top:108px;width:1px;height:690px;background:#d2d2d2"></div>
<span class="t" style="left:1296.80px;top:114.02px;font-size:11.2px;line-height:11.2px;color:#1a1a1a;letter-spacing:0.096px;transform:rotate(0.03deg) scaleX(1.0300);transform-origin:0 50%;-webkit-text-stroke:0.25px #1a1a1a;">Layer List</span>
<span class="t" style="left:1183.00px;top:160.83px;font-size:12.6px;line-height:12.6px;color:#111;transform:rotate(0.03deg) scaleX(1.0274);transform-origin:0 50%;-webkit-text-stroke:0.4px #111;">0</span>
<span class="t" style="left:1183.00px;top:180.83px;font-size:12.6px;line-height:12.6px;color:#111;transform:rotate(0.03deg) scaleX(1.0471);transform-origin:0 50%;-webkit-text-stroke:0.4px #111;">Center</span>
<span class="t" style="left:1183.00px;top:200.83px;font-size:12.6px;line-height:12.6px;color:#111;transform:rotate(0.03deg) scaleX(1.0669);transform-origin:0 50%;-webkit-text-stroke:0.4px #111;">Hidden</span>
<span class="t" style="left:1183.00px;top:220.83px;font-size:12.6px;line-height:12.6px;color:#111;transform:rotate(0.03deg) scaleX(1.0626);transform-origin:0 50%;-webkit-text-stroke:0.4px #111;">Visible</span>
<div class="a" style="left:1455px;top:108px;width:45px;height:690px;background:linear-gradient(90deg,#f2f2f2 0,#e9e9e9 20%,#d8d8d8 60%,#cbcbcb 95%,#b9b9b9 100%)"></div>
<div class="a" style="left:1456px;top:120px;width:43px;height:43px;background:#b5b5b5;border-radius:5px"></div>
<div class="a" style="left:1456px;top:417px;width:43px;height:43px;background:#b5b5b5;border-radius:5px"></div>
<div class="a" style="left:1462px;top:116px;width:2px;height:2px;background:#9a9a9a"></div>
<div class="a" style="left:1468px;top:116px;width:2px;height:2px;background:#9a9a9a"></div>
<div class="a" style="left:1474px;top:116px;width:2px;height:2px;background:#9a9a9a"></div>
<div class="a" style="left:1480px;top:116px;width:2px;height:2px;background:#9a9a9a"></div>
<div class="a" style="left:1486px;top:116px;width:2px;height:2px;background:#9a9a9a"></div>
<div class="a" style="left:1458px;top:261px;width:41px;height:1px;background:repeating-linear-gradient(90deg,#555 0,#555 1px,transparent 1px,transparent 3px)"></div>
<div class="a" style="left:1458px;top:409px;width:41px;height:1px;background:repeating-linear-gradient(90deg,#555 0,#555 1px,transparent 1px,transparent 3px)"></div>
<svg style="left:1155px;top:108px" width="345" height="690" viewBox="1155 108 345 690"><circle cx="1164.1" cy="117.9" r="6.9" fill="#666"/><path d="M1161.1 114.9L1167.1 120.9M1167.1 114.9L1161.1 120.9" stroke="#ececec" stroke-width="1.8" stroke-linecap="round"/><circle cx="1182" cy="117.9" r="6.9" fill="#666"/><rect x="1180.4" y="115.6" width="5.4" height="4.2" rx="0.5" fill="none" stroke="#efefef" stroke-width="0.9"/><rect x="1178.4" y="117.4" width="5.4" height="4.2" rx="0.5" fill="#5a5a5a" stroke="#efefef" stroke-width="0.9"/><g transform="translate(1185.00 142.50)" opacity="1.0"><path d="M-7.5 0.3Q-6.6 -3.6 -2.6 -5.2Q1.6 -6.6 5.2 -3.8Q7 -2.2 7.6 0.5Q5.6 3.4 3.6 4.6Q0.4 6.6 -3.4 4.8Q-6 3.4 -7.5 0.3Z" fill="#000"/><path d="M-4.5 0.6Q-3 -2.4 0.2 -2.6Q3.4 -2.6 5 0.5Q3.2 3.6 0.3 3.7Q-2.8 3.6 -4.5 0.6Z" fill="#fff"/><circle cx="0.2" cy="-0.5" r="2.5" fill="#000"/><circle cx="-0.7" cy="-1.3" r="0.7" fill="#fff" opacity="0.75"/></g><g transform="translate(1245.00 142.50)" opacity="1.0"><path d="M-7.5 0.3Q-6.6 -3.6 -2.6 -5.2Q1.6 -6.6 5.2 -3.8Q7 -2.2 7.6 0.5Q5.6 3.4 3.6 4.6Q0.4 6.6 -3.4 4.8Q-6 3.4 -7.5 0.3Z" fill="#9c9c9c"/><path d="M-4.5 0.6Q-3 -2.4 0.2 -2.6Q3.4 -2.6 5 0.5Q3.2 3.6 0.3 3.7Q-2.8 3.6 -4.5 0.6Z" fill="#fff"/><circle cx="0.2" cy="-0.5" r="2.5" fill="#9c9c9c"/><circle cx="-0.7" cy="-1.3" r="0.7" fill="#fff" opacity="0.75"/></g><path d="M1305 136.6V148.4M1299.1 142.5H1310.9" stroke="#8a0000" stroke-width="3.6"/><path d="M1305 137V148M1299.5 142.5H1310.5" stroke="#f00000" stroke-width="2.7"/><rect x="1359" y="141.1" width="12" height="3.6" rx="0.6" fill="#f00000" stroke="#8a0000" stroke-width="0.5"/><g transform="translate(1418.00 149.80) rotate(-45.00)"><path d="M0 0L3.4 -1.4H19.94V1.4H3.4Z" fill="#dba032" stroke="#8a5a14" stroke-width="0.5" stroke-linejoin="round"/><path d="M3.4 -0.42H16.74" stroke="#f0c868" stroke-width="0.9"/><rect x="16.74" y="-1.4" width="3.2" height="2.8" rx="0.6" fill="#e4141c"/><path d="M0 0L3.4 -1.4V1.4Z" fill="#c89a58"/><path d="M0 0L1.5 -0.63V0.63Z" fill="#333"/></g><rect x="1161.5" y="163.5" width="15" height="8" fill="#fff" stroke="#000" stroke-width="1"/><g transform="translate(1422.70 166.60)" opacity="1.0"><path d="M-7.5 0.3Q-6.6 -3.6 -2.6 -5.2Q1.6 -6.6 5.2 -3.8Q7 -2.2 7.6 0.5Q5.6 3.4 3.6 4.6Q0.4 6.6 -3.4 4.8Q-6 3.4 -7.5 0.3Z" fill="#000"/><path d="M-4.5 0.6Q-3 -2.4 0.2 -2.6Q3.4 -2.6 5 0.5Q3.2 3.6 0.3 3.7Q-2.8 3.6 -4.5 0.6Z" fill="#fff"/><circle cx="0.2" cy="-0.5" r="2.5" fill="#000"/><circle cx="-0.7" cy="-1.3" r="0.7" fill="#fff" opacity="0.75"/></g><path d="M1442.10 167.2V164.80Q1442.10 160.80 1445.10 160.80Q1448.10 160.80 1448.10 164.80V167.2" stroke="#c0c0c0" stroke-width="1.1" fill="none"/><rect x="1440.20" y="166.40" width="9.8" height="7.4" fill="#b6b6b6"/><rect x="1161.5" y="183.5" width="15" height="8" fill="#ff0000" stroke="#000" stroke-width="1"/><g transform="translate(1422.70 186.60)" opacity="1.0"><path d="M-7.5 0.3Q-6.6 -3.6 -2.6 -5.2Q1.6 -6.6 5.2 -3.8Q7 -2.2 7.6 0.5Q5.6 3.4 3.6 4.6Q0.4 6.6 -3.4 4.8Q-6 3.4 -7.5 0.3Z" fill="#000"/><path d="M-4.5 0.6Q-3 -2.4 0.2 -2.6Q3.4 -2.6 5 0.5Q3.2 3.6 0.3 3.7Q-2.8 3.6 -4.5 0.6Z" fill="#fff"/><circle cx="0.2" cy="-0.5" r="2.5" fill="#000"/><circle cx="-0.7" cy="-1.3" r="0.7" fill="#fff" opacity="0.75"/></g><path d="M1442.10 187.2V184.80Q1442.10 180.80 1445.10 180.80Q1448.10 180.80 1448.10 184.80V187.2" stroke="#c0c0c0" stroke-width="1.1" fill="none"/><rect x="1440.20" y="186.40" width="9.8" height="7.4" fill="#b6b6b6"/><rect x="1161.5" y="203.5" width="15" height="8" fill="#000" stroke="#000" stroke-width="1"/><g transform="translate(1422.70 206.60)" opacity="1.0"><path d="M-7.5 0.3Q-6.6 -3.6 -2.6 -5.2Q1.6 -6.6 5.2 -3.8Q7 -2.2 7.6 0.5Q5.6 3.4 3.6 4.6Q0.4 6.6 -3.4 4.8Q-6 3.4 -7.5 0.3Z" fill="#000"/><path d="M-4.5 0.6Q-3 -2.4 0.2 -2.6Q3.4 -2.6 5 0.5Q3.2 3.6 0.3 3.7Q-2.8 3.6 -4.5 0.6Z" fill="#fff"/><circle cx="0.2" cy="-0.5" r="2.5" fill="#000"/><circle cx="-0.7" cy="-1.3" r="0.7" fill="#fff" opacity="0.75"/></g><path d="M1442.10 207.2V204.80Q1442.10 200.80 1445.10 200.80Q1448.10 200.80 1448.10 204.80V207.2" stroke="#c0c0c0" stroke-width="1.1" fill="none"/><rect x="1440.20" y="206.40" width="9.8" height="7.4" fill="#b6b6b6"/><rect x="1161.5" y="223.5" width="15" height="8" fill="#fff" stroke="#000" stroke-width="1"/><g transform="translate(1422.70 226.60)" opacity="1.0"><path d="M-7.5 0.3Q-6.6 -3.6 -2.6 -5.2Q1.6 -6.6 5.2 -3.8Q7 -2.2 7.6 0.5Q5.6 3.4 3.6 4.6Q0.4 6.6 -3.4 4.8Q-6 3.4 -7.5 0.3Z" fill="#000"/><path d="M-4.5 0.6Q-3 -2.4 0.2 -2.6Q3.4 -2.6 5 0.5Q3.2 3.6 0.3 3.7Q-2.8 3.6 -4.5 0.6Z" fill="#fff"/><circle cx="0.2" cy="-0.5" r="2.5" fill="#000"/><circle cx="-0.7" cy="-1.3" r="0.7" fill="#fff" opacity="0.75"/></g><path d="M1442.10 227.2V224.80Q1442.10 220.80 1445.10 220.80Q1448.10 220.80 1448.10 224.80V227.2" stroke="#c0c0c0" stroke-width="1.1" fill="none"/><rect x="1440.20" y="226.40" width="9.8" height="7.4" fill="#b6b6b6"/><g transform="translate(1396.20 233.20) rotate(-46.01)"><path d="M0 0L3.4 -1.3H16.12V1.3H3.4Z" fill="#dba032" stroke="#8a5a14" stroke-width="0.5" stroke-linejoin="round"/><path d="M3.4 -0.39H12.92" stroke="#f0c868" stroke-width="0.9"/><rect x="12.92" y="-1.3" width="3.2" height="2.6" rx="0.6" fill="#e4141c"/><path d="M0 0L3.4 -1.3V1.3Z" fill="#c89a58"/><path d="M0 0L1.5 -0.59V0.59Z" fill="#333"/></g><rect x="1463.3" y="127" width="27.5" height="27.5" fill="#fff" stroke="#555" stroke-width="0.8"/><rect x="1463.3" y="127" width="27.5" height="4.8" fill="#000"/><rect x="1464.2" y="127.9" width="3" height="3" fill="#fff"/><path d="M1470.2 140.6L1476.6 137.8V145.6L1470.2 148.4Z" fill="#a8a8a8" stroke="#666" stroke-width="0.6"/><path d="M1472.2 139.6L1480 136.4V145.2L1472.2 148.6Z" fill="#d8d8d8" stroke="#777" stroke-width="0.6"/><path d="M1474.6 139.2L1483.6 136V146.2L1474.6 149.6Z" fill="#fff" stroke="#888" stroke-width="0.6"/><path d="M1476.4 146.4L1481.6 138.8V145.2M1477.8 144.2L1481.6 142.6" stroke="#ff3030" stroke-width="0.7" fill="none"/><rect x="1463.3" y="174" width="27.5" height="27.5" fill="#fff" stroke="#555" stroke-width="0.8"/><rect x="1463.3" y="174" width="27.5" height="4.8" fill="#000"/><rect x="1464.2" y="174.9" width="3" height="3" fill="#fff"/><rect x="1470.4" y="184.4" width="10.4" height="7.2" fill="#faf0c8" stroke="#555" stroke-width="0.7"/><circle cx="1479" cy="190.8" r="4" fill="#faf0c8" fill-opacity="0.8" stroke="#666" stroke-width="0.7"/><rect x="1463.3" y="220" width="27.5" height="27.5" fill="#fff" stroke="#555" stroke-width="0.8"/><rect x="1463.3" y="220" width="27.5" height="4.8" fill="#000"/><rect x="1464.2" y="220.9" width="3" height="3" fill="#fff"/><rect x="1468.6" y="230.6" width="16.8" height="10.4" rx="1.8" fill="#f7f7f5" stroke="#c4d2ea" stroke-width="0.8"/><rect x="1463.3" y="276" width="27.5" height="27.5" fill="#fff" stroke="#555" stroke-width="0.8"/><rect x="1463.3" y="276" width="27.5" height="4.8" fill="#000"/><rect x="1464.2" y="276.9" width="3" height="3" fill="#fff"/><rect x="1466.2" y="284.2" width="4.6" height="3.6" rx="0.8" fill="#000"/><rect x="1473.4" y="284.4" width="14.2" height="3.2" rx="0.6" fill="#fff" stroke="#666" stroke-width="0.7"/><rect x="1466.2" y="290.2" width="4.6" height="3.6" rx="0.8" fill="#000"/><rect x="1473.4" y="290.4" width="14.2" height="3.2" rx="0.6" fill="#fff" stroke="#666" stroke-width="0.7"/><rect x="1466.2" y="296.2" width="4.6" height="3.6" rx="0.8" fill="#000"/><rect x="1473.4" y="296.4" width="14.2" height="3.2" rx="0.6" fill="#fff" stroke="#666" stroke-width="0.7"/><rect x="1463.3" y="322" width="27.5" height="27.5" fill="#fff" stroke="#555" stroke-width="0.8"/><rect x="1463.3" y="322" width="27.5" height="4.8" fill="#000"/><rect x="1464.2" y="322.9" width="3" height="3" fill="#fff"/><path d="M1470.2 332.4H1484L1478.4 338.6V344.8L1475.8 343.2V338.6Z" fill="#b4b4b4" stroke="#666" stroke-width="0.6" stroke-linejoin="round"/><ellipse cx="1477.1" cy="332.3" rx="7" ry="1.2" fill="#555"/><rect x="1463.3" y="368" width="27.5" height="27.5" fill="#fff" stroke="#555" stroke-width="0.8"/><rect x="1463.3" y="368" width="27.5" height="4.8" fill="#000"/><rect x="1464.2" y="368.9" width="3" height="3" fill="#fff"/><path d="M1469.2 377.2L1473.2 380.2V387.8L1469.2 390.8Z" fill="#e8e8e8" stroke="#555" stroke-width="0.7" stroke-linejoin="round"/><rect x="1473.2" y="380.4" width="4" height="7.2" fill="#fff" stroke="#777" stroke-width="0.5"/><rect x="1477" y="380.2" width="7.8" height="7.6" rx="1.2" fill="#7c7c7c"/><path d="M1467 384H1487" stroke="#ff9aa8" stroke-width="0.8" stroke-dasharray="2.4 1"/><rect x="1463.3" y="424" width="27.5" height="27.5" fill="#fff" stroke="#555" stroke-width="0.8"/><rect x="1463.3" y="424" width="27.5" height="4.8" fill="#000"/><rect x="1464.2" y="424.9" width="3" height="3" fill="#fff"/><path d="M1465.6 433.0H1479.6" stroke="#9a9a9a" stroke-width="0.9" stroke-dasharray="3 0.6 4 0.8"/><path d="M1465.6 436.3H1480.8" stroke="#9a9a9a" stroke-width="0.9" stroke-dasharray="3 0.6 4 0.8"/><path d="M1465.6 439.6H1482.0" stroke="#9a9a9a" stroke-width="0.9" stroke-dasharray="3 0.6 4 0.8"/><path d="M1465.6 442.9H1483.2" stroke="#9a9a9a" stroke-width="0.9" stroke-dasharray="3 0.6 4 0.8"/><path d="M1463.5 446.6H1490.6" stroke="#444" stroke-width="0.7"/><path d="M1472.4 449.4H1487.4" stroke="#555" stroke-width="1.3" stroke-dasharray="1.4 0.5"/><path d="M1466.8 448L1465.4 449.4L1466.8 450.6" stroke="#444" stroke-width="0.6" fill="none"/><rect x="1463.3" y="471" width="27.5" height="27.5" fill="#fff" stroke="#555" stroke-width="0.8"/><rect x="1463.3" y="471" width="27.5" height="4.8" fill="#000"/><rect x="1464.2" y="471.9" width="3" height="3" fill="#fff"/><rect x="1471.2" y="481" width="11.8" height="12.6" rx="0.8" fill="#c98a1c" stroke="#a86c10" stroke-width="0.5"/><rect x="1472.6" y="482.2" width="9" height="10.2" fill="#f4f4f2"/><path d="M1474 485.4H1480M1474 487.4H1480M1474 489.4H1478" stroke="#c8c8c8" stroke-width="0.7"/><rect x="1474.6" y="479.6" width="5" height="2.4" rx="0.6" fill="#9a9a92"/><path d="M1479 490H1481.6V492.4H1479Z" fill="#b0b0b0"/></svg>
</div>
</body></html>
